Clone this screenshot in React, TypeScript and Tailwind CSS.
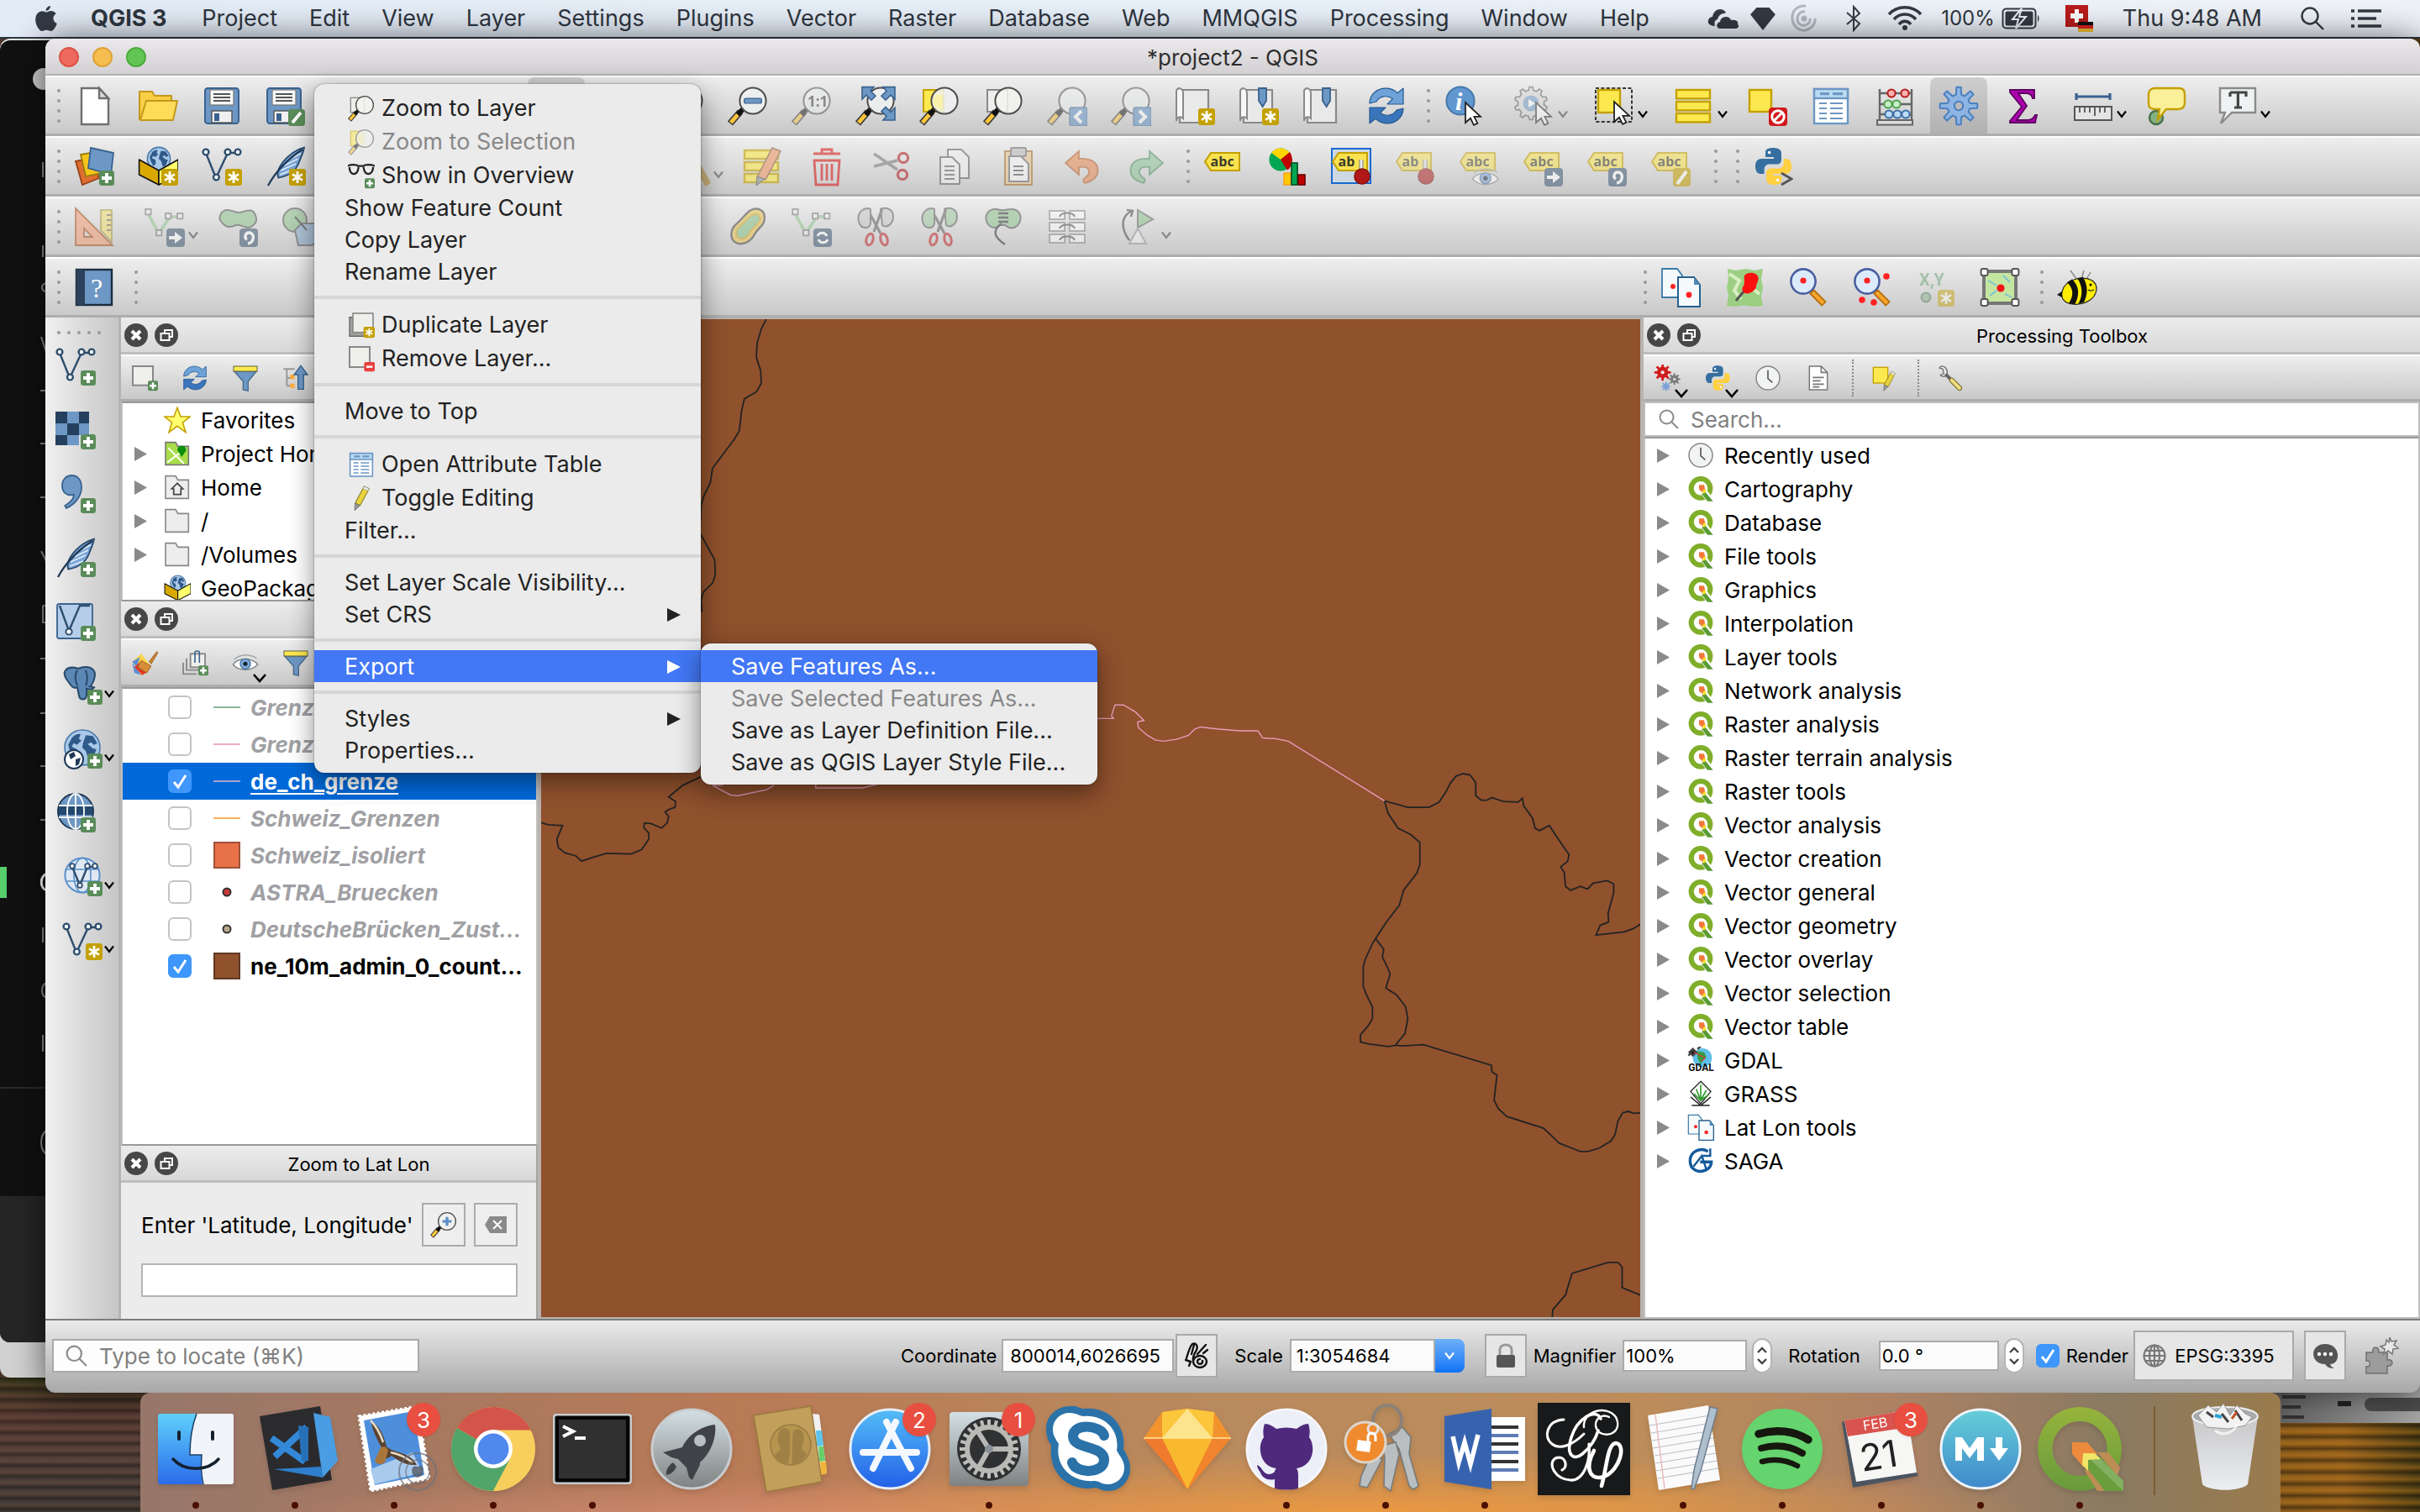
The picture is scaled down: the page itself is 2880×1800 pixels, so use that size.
import React from "react";

type Kids = { children?: React.ReactNode };
type IconProps = { className?: string };

/* ---------- drawing helpers ---------- */

function gearPath(cx: number, cy: number, teeth: number, outer: number, inner: number) {
  const pts: string[] = [];
  const step = (Math.PI * 2) / teeth;
  for (let i = 0; i < teeth; i++) {
    const a = i * step - Math.PI / 2;
    const at = (r: number, o: number) =>
      `${(cx + r * Math.cos(a + o * step)).toFixed(2)} ${(cy + r * Math.sin(a + o * step)).toFixed(2)}`;
    pts.push(at(inner, -0.3), at(outer, -0.15), at(outer, 0.15), at(inner, 0.3));
  }
  return `M${pts.join("L")}Z`;
}

function Svg({ children, className = "size-12" }: Kids & IconProps) {
  return (
    <svg viewBox="0 0 24 24" fill="none" aria-hidden="true" className={`${className} shrink-0`}>
      {children}
    </svg>
  );
}

const PlusBadge = () => (
  <g>
    <rect x="15" y="14.5" width="9" height="9" rx="1.6" fill="#5a8c5a" />
    <path d="M19.5 16v6M16.5 19h6" stroke="#fff" strokeWidth="1.9" />
  </g>
);
const StarBadge = () => (
  <g>
    <rect x="14" y="13.500" width="10" height="10" rx="1.6" fill="#c4a000" />
    <path d="M19 15v7M16 16.700l6 3.600M16 20.300l6-3.600" stroke="#fff" strokeWidth="1.4" />
  </g>
);
const ArrowBadge = () => (
  <g>
    <rect x="13" y="13" width="11" height="11" rx="2" fill="#415a75" />
    <path d="M14.500 17.500h3.500v-2.500l4.500 3.500-4.500 3.500v-2.500h-3.500z" fill="#fff" />
  </g>
);
const RotateBadge = () => (
  <g>
    <rect x="13" y="13" width="11" height="11" rx="2" fill="#415a75" />
    <path d="M18 22c3.600-.5 4.500-6 1-6.500-2.500-.2-3.500 3-1.500 4" stroke="#fff" strokeWidth="1.700" />
  </g>
);

function Lens({ children, blank }: Kids & { blank?: boolean }) {
  return (
    <g>
      <path d="M1.500 22.500L7.500 15.500" stroke="#3a3a3a" strokeWidth="4" />
      <path d="M1.900 22L6.200 17" stroke="#fcc63c" strokeWidth="2.400" />
      <path d="M6 17.300L9.500 13.500" stroke="#111" strokeWidth="3" />
      <circle cx="15" cy="9" r="7.800" fill={blank ? "#f3f3f0" : "#eef1f1"} fillOpacity="0.85" stroke="#4d4d4d" strokeWidth="1" />
      {children}
    </g>
  );
}

const VectorV = ({ c = "#2e4e6e", f = "#fff" }: { c?: string; f?: string }) => (
  <g stroke={c} strokeWidth="1.200">
    <path d="M2.500 4L8.500 19 15.500 4h6" fill="none" />
    <circle cx="2.500" cy="3.500" r="1.700" fill={f} />
    <circle cx="15.500" cy="3.500" r="1.700" fill={f} />
    <circle cx="21.500" cy="3.500" r="1.700" fill={f} />
    <circle cx="8.700" cy="18.500" r="1.700" fill={f} />
  </g>
);
const EditV = () => (
  <g>
    <path d="M2 4L8.500 16 15 6h7" stroke="#8fc48f" strokeWidth="1.800" />
    <g fill="#eee" stroke="#777" strokeWidth="0.900">
      <rect x="0.600" y="1.500" width="3.200" height="3.200" />
      <rect x="12.500" y="4" width="3.200" height="3.200" />
      <rect x="19.500" y="4" width="3.200" height="3.200" />
      <rect x="7" y="14" width="3.200" height="3.200" />
    </g>
  </g>
);
const Feather = () => (
  <g>
    <path d="M23 .8c-6 1.500-12.500 7-15 12.500-.8 1.800-1 3.700-.4 5.500C13 18 18 15 20 9.500 21 6.500 22.500 4 23 .8z" fill="#7ba6d6" stroke="#27496b" strokeWidth="0.900" />
    <path d="M8.500 17l8-3M9 14.500l9-4M11 11.500l8.500-4M13 8.500l8-4.200" stroke="#dcebf8" strokeWidth="0.900" />
    <path d="M22 2C14 7 6 15 1.500 23.500" stroke="#1f3a57" strokeWidth="1.100" />
  </g>
);
const Globe = ({ x = 12, y = 12, r = 10 }: { x?: number; y?: number; r?: number }) => (
  <g>
    <circle cx={x} cy={y} r={r} fill="#a9c8e8" stroke="#4a78ab" strokeWidth="0.800" />
    <path
      transform={`translate(${x - r} ${y - r}) scale(${r / 10})`}
      d="M4 4.500c2-2 4-2.500 5-2l-1 2.500 1.500 1-2.500 2.500-2-1L4 9.500l3 1.500.5 3-2 2.500C4 15 2.500 11 2 8.500zM12 3l4 .5 2.500 4-2 1-1.500-1.500-2 1 3 2.500 2 .5-2 5-2.500 1-1.500-5-2-2 .5-3z"
      fill="#2f5a8a"
      stroke="none"
    />
  </g>
);
const GeoBox = () => (
  <g stroke="#111" strokeWidth="0.800" strokeLinejoin="round">
    <Globe x={12.5} y={7.5} r={6.8} />
    <path d="M.8 8L12.500 14.500V23L.8 17z" fill="#d9a800" />
    <path d="M24 8L12.500 14.500V23L24 17z" fill="#ffff6e" />
  </g>
);
const Arrows = () => (
  <g stroke="#24588f" strokeWidth="0.600" strokeLinejoin="round">
    <path d="M2 10.500C2 5 7 1 12.500 1.600c2.300.2 4.500 1.200 6 2.800L22 1.600v9.400h-9.500l3.200-3.200C12.500 5.500 8 6 6 9.500z" fill="#6fa3d8" />
    <path d="M22 13.500c0 5.500-5 9.500-10.500 8.900-2.300-.2-4.500-1.200-6-2.800L2 22.400V13h9.500l-3.200 3.200c3.200 2.300 7.700 1.800 9.700-1.700z" fill="#3a74ba" />
  </g>
);
const Tag = ({ t = "abc" }: { t?: string }) => (
  <g>
    <path d="M4.500 4h17v10.500h-17L1 9.200z" fill="#f9e24f" stroke="#c4a000" strokeWidth="1" />
    <text x="4.300" y="12" fontSize="8" fontWeight="700" fontFamily="Open Sans, sans-serif" fill="#3b3b2a">{t}</text>
  </g>
);
const Pin = () => (
  <g>
    <path d="M18 8v7" stroke="#8a8a8a" strokeWidth="2.600" />
    <path d="M18 8v7" stroke="#eee" strokeWidth="1.400" />
    <circle cx="18.500" cy="18" r="4.600" fill="#b01717" stroke="#7c1010" strokeWidth="0.600" />
  </g>
);
const Cursor = ({ x = 0, y = 0 }: { x?: number; y?: number }) => (
  <path transform={`translate(${x} ${y})`} d="M12 10v12l3-2.600 2 4 2.200-1-2-4h3.800z" fill="#fff" stroke="#222" strokeWidth="0.900" />
);
const Snake = () => (
  <g>
    <path d="M11.800 1C7.500 1 7.500 3 7.500 4.200V6.500h5v1H5.200C2.500 7.500 1.500 9.500 1.500 12s1 4.500 3.300 4.500h2v-2.800c0-1.700 1.300-3 3-3h4.700c1.500 0 2.500-1.100 2.500-2.500v-4C17 2 15 1 11.800 1z" fill="#366f9f" />
    <circle cx="9.800" cy="3.800" r="0.900" fill="#fff" />
    <path d="M12.800 23c4.300 0 4.300-2 4.300-3.200v-2.300h-5v-1h7.300c2.700 0 3.700-2 3.700-4.500s-1-4.500-3.300-4.500h-1.500v2.800c0 1.700-1.300 3-3 3h-4.700c-1.500 0-2.500 1.100-2.500 2.500v4c0 2.200 1.500 3.200 4.700 3.200z" fill="#ffd041" />
    <circle cx="14.800" cy="20.200" r="0.900" fill="#fff" />
  </g>
);
const GridTable = () => (
  <g stroke="#6d97c4">
    <rect x="2" y="2" width="20" height="20.500" fill="#fff" strokeWidth="1.200" />
    <rect x="2" y="2" width="20" height="5.500" fill="#b8daf3" strokeWidth="1.200" />
    <path d="M5.500 4.800H11M13 4.800h6" strokeWidth="1.700" />
    <path d="M5 10.500h4.500M11.500 10.500H19M5 13.500h4.500M11.500 13.500H19M5 16.500h4.500M11.500 16.500H19M5 19.500h4.500M11.500 19.500H19" strokeWidth="1.100" />
  </g>
);
const CopyDots = () => (
  <g>
    <path d="M1 1h9l3 4v13H1z" fill="#f5fafd" stroke="#3a7aa8" strokeWidth="0.900" />
    <circle cx="7.500" cy="11.500" r="1.500" fill="#f22" />
    <path d="M10.500 6H20l3.500 4.500v13h-13z" fill="#f5fafd" stroke="#25608f" strokeWidth="1" />
    <path d="M20 6v4.500h3.500z" fill="#4d8cbb" />
    <circle cx="17" cy="16.500" r="1.700" fill="#f22" />
  </g>
);
const Funnel = () => (
  <g>
    <path d="M2 6l8 9v7.500l4.500 1V15L22 6z" fill="#6d97c4" stroke="#49698c" />
    <rect x="1.500" y="1.500" width="21" height="4.500" fill="#fce94f" stroke="#6b6b40" strokeWidth="0.800" />
  </g>
);
const Eye = () => (
  <g>
    <path d="M1 13.500C5 7.500 18 7 23 13.500 18 19.500 6 20 1 13.500z" fill="#fff" stroke="#7b8288" />
    <circle cx="12" cy="13" r="4.600" fill="#7ba8da" stroke="#3d6592" strokeWidth="0.800" />
    <circle cx="12" cy="13" r="1.900" fill="#17202b" />
    <path d="M2 9C7 4 17 4 22 8" stroke="#9aa0a5" strokeWidth="1" />
  </g>
);
const Clock = () => (
  <g stroke="#858585">
    <circle cx="12" cy="12" r="10.500" fill="#f2f4f3" strokeWidth="1.100" />
    <path d="M12 5v7.500l4 3.500" stroke="#555" strokeWidth="1.200" />
  </g>
);
const Pencil = ({ c = "#e8d33f" }: { c?: string }) => (
  <g>
    <path d="M14.500 1.500l4.500 2-8 15-4.500-2z" fill={c} stroke="#8a7a20" strokeWidth="0.800" />
    <path d="M6.500 16.500l4.500 2-5 4.500z" fill="#999" stroke="#666" strokeWidth="0.600" />
    <path d="M14.500 1.500l4.500 2-1 2-4.500-2z" fill="#eee" stroke="#999" strokeWidth="0.500" />
  </g>
);
const QMark = () => (
  <g>
    <circle cx="12" cy="11.500" r="8.500" stroke="#7fae2a" strokeWidth="4.600" />
    <path d="M12.500 11.500l8 11" stroke="#fff" strokeWidth="6" />
    <path d="M15.500 14l7.500 9h-5l-5-6.500z" fill="#5a9a33" />
    <path d="M10.500 8.500h4.500l1 4.500-2.500 2-3-2.500z" fill="#f1783c" />
    <path d="M13.500 13.500l2.500-1.500 1 2.500-2.500 2z" fill="#f8e02f" />
  </g>
);
const Scissors = ({ blob = "#9cc79c" }: { blob?: string }) => (
  <g>
    <path d="M8 1C3 1 1 5 2 9s6 5 7 1V1.500zM15 1.500c3.500-1.500 7.500 0 7.500 4.500s-4 7-6.500 5z" fill={blob} stroke="#555" />
    <path d="M16 1l-5 14M9 5l6 11" stroke="#555" strokeWidth="1.600" />
    <ellipse cx="8.500" cy="19.500" rx="2" ry="3.500" stroke="#c01818" strokeWidth="1.500" transform="rotate(15 8.500 19.500)" />
    <ellipse cx="17" cy="19.500" rx="2" ry="3.500" stroke="#c01818" strokeWidth="1.500" transform="rotate(-15 17 19.500)" />
  </g>
);
const Sheet = () => (
  <g>
    <path d="M3 4.500V22h17V2.500H4.500" fill="#e9e9e9" stroke="#8a8a8a" strokeWidth="1.100" />
    <path d="M1 3c1-2.500 4-1.500 4 1.500v15c-1.500-1.500-4-1-4 1.500z" fill="#f7f7f7" stroke="#8a8a8a" strokeWidth="1" />
  </g>
);
const Bookmark = () => <path d="M12 1.500h4.500V9l-2.200 3.500L12 9z" fill="#6d97c4" stroke="#39628f" strokeWidth="0.900" />;

/* ---------- icons by name ---------- */

const ICONS: Record<string, React.ReactNode> = {
  newDoc: (
    <g stroke="#6f6f6f" strokeWidth="1.200">
      <path d="M4.500 1.500h10.500l5.500 6v15.500h-16z" fill="#fff" />
      <path d="M15 1.500v6h5.500z" fill="#d8d8d8" />
    </g>
  ),
  open: (
    <g stroke="#c4981c" strokeWidth="1" strokeLinejoin="round">
      <path d="M1 3.500h7.500l1.500 2.500H20v14H1z" fill="#f8cf45" />
      <path d="M5 9h18.500l-2.500 11.500H1.500z" fill="#fedb58" />
    </g>
  ),
  save: (
    <g>
      <rect x="2" y="1.500" width="20" height="21" rx="1.600" fill="#6d97c4" stroke="#39628f" strokeWidth="1" />
      <rect x="5" y="2.500" width="14" height="9" fill="#f7f7f7" stroke="#777" strokeWidth="0.600" />
      <path d="M7 5h10M7 7h10M7 9h10" stroke="#555" strokeWidth="1" />
      <rect x="6" y="15" width="12" height="7" fill="#f0f0f0" stroke="#555" strokeWidth="0.700" />
      <rect x="7.500" y="16.500" width="3" height="4.500" fill="#39628f" />
    </g>
  ),
  saveAs: (
    <g>
      <rect x="1" y="1.500" width="20" height="21" rx="1.600" fill="#6d97c4" stroke="#39628f" strokeWidth="1" />
      <rect x="4" y="2.500" width="14" height="9" fill="#f7f7f7" stroke="#777" strokeWidth="0.600" />
      <path d="M6 5h10M6 7h10M6 9h10" stroke="#555" strokeWidth="1" />
      <rect x="5" y="15" width="12" height="7" fill="#f0f0f0" stroke="#555" strokeWidth="0.700" />
      <rect x="6.500" y="16.500" width="3" height="4.500" fill="#39628f" />
      <rect x="13.500" y="14" width="10" height="10" rx="1.800" fill="#5a8c5a" />
      <path d="M16 22l5-6" stroke="#fff" strokeWidth="1.900" />
    </g>
  ),
  hand: <path d="M6 12V6m4 5V3m4 8V4m4 8V7v8c0 5-3 7-6 7s-6-3-9-9" stroke="#555" strokeWidth="2" />,
  zoomIn: <Lens><path d="M15 5.500v7M11.500 9h7" stroke="#5b8dc4" strokeWidth="2.400" /></Lens>,
  zoomOut: <Lens><rect x="9.800" y="7.600" width="10.400" height="2.900" rx="1" fill="#6d97c4" stroke="#39628f" strokeWidth="0.600" /></Lens>,
  zoom11: (
    <g opacity="0.5"><Lens><text x="9.500" y="12.500" fontSize="8.500" fontWeight="700" fontFamily="Open Sans, sans-serif" fill="#333">1:1</text></Lens></g>
  ),
  zoomFull: (
    <g>
      <Lens />
      <g fill="#6d97c4" stroke="#39628f" strokeWidth="0.800">
        <path d="M4 .8h7l-2 2.300 3 3-2.500 2.500-3-3L4 8z" />
        <path d="M23.500.8h-7l2 2.300-3 3 2.500 2.500 3-3 2.500 2.400z" />
        <path d="M23.500 20.500h-7l2-2.300-3-3 2.500-2.500 3 3 2.500-2.500z" />
      </g>
    </g>
  ),
  zoomSel: <g><rect x="2.500" y="2.500" width="12" height="13" fill="#fce94f" stroke="#c4a000" /><Lens><path d="M10 5.500h4v8.500c-3 0-6-2-6-5z" fill="#fbf0a0" opacity="0.800" /></Lens></g>,
  zoomLayer: <g><rect x="2.500" y="2.500" width="12" height="13" fill="#eeeeec" stroke="#888" /><Lens blank /></g>,
  zoomPrev: <g opacity="0.5"><Lens /><rect x="13.500" y="13" width="10.500" height="11" rx="1" fill="#5b8dc4" stroke="#39628f" strokeWidth="0.700" /><path d="M20.500 15l-3.500 3.500 3.500 3.500" stroke="#fff" strokeWidth="2" /></g>,
  zoomNext: <g opacity="0.5"><Lens /><rect x="13.500" y="13" width="10.500" height="11" rx="1" fill="#5b8dc4" stroke="#39628f" strokeWidth="0.700" /><path d="M17 15l3.500 3.500L17 22" stroke="#fff" strokeWidth="2" /></g>,
  newMap: <g><Sheet /><StarBadge /></g>,
  newBookmark: <g><Sheet /><Bookmark /><StarBadge /></g>,
  bookmark: <g><Sheet /><Bookmark /></g>,
  refresh: <Arrows />,
  identify: <g><circle cx="10" cy="9" r="8.300" fill="#6197cf" stroke="#4677ab" /><text x="7" y="14.500" fontSize="15" fontWeight="700" fontStyle="italic" fontFamily="Liberation Serif, serif" fill="#fff">i</text><Cursor x={1} /></g>,
  action: <g opacity="0.5"><path d={gearPath(10, 10.5, 10, 9.8, 7.8)} fill="#d8d8d8" stroke="#555" strokeWidth="0.800" /><circle cx="10" cy="10.500" r="4.800" fill="#6d97c4" /><path d="M8.500 8l4 2.500-4 2.500z" fill="#fff" /><Cursor x={1} /></g>,
  select: <g><rect x="1" y="1.500" width="21.500" height="20" stroke="#333" strokeWidth="1" strokeDasharray="2 1.200" /><rect x="2.500" y="2.500" width="13" height="13.500" fill="#fce94f" stroke="#c4a000" strokeWidth="1.200" /><Cursor y={-0.500} /></g>,
  bars: <g fill="#fce94f" stroke="#c4a000" strokeWidth="1.200"><rect x="1.500" y="2.500" width="20" height="5.200" /><rect x="1.500" y="9.500" width="20" height="5.200" /><rect x="1.500" y="16.500" width="20" height="5.200" /></g>,
  deselect: <g><rect x="1.500" y="2.500" width="13" height="13" fill="#fce94f" stroke="#c4a000" strokeWidth="1.200" /><rect x="13" y="13" width="11" height="11" rx="2" fill="#d0191c" /><circle cx="18.500" cy="18.500" r="3.600" stroke="#fff" strokeWidth="1.500" /><path d="M16 21l5-5" stroke="#fff" strokeWidth="1.500" /></g>,
  table: <GridTable />,
  abacus: (
    <g>
      <path d="M3 2v18M22 2v18M3 4.500h19M3 11h19M3 17h19" stroke="#666" strokeWidth="1.200" />
      <g fill="#ffb0b0" stroke="#b81c1c"><circle cx="10" cy="4.500" r="2.300" /><circle cx="18" cy="4.500" r="2.300" /></g>
      <g fill="#c8f0c8" stroke="#4f9f4f"><circle cx="8" cy="11" r="2.300" /><circle cx="13" cy="11" r="2.300" /></g>
      <g fill="#bcdcf6" stroke="#3d6fa5"><circle cx="8.500" cy="17" r="2.300" /><circle cx="13.500" cy="17" r="2.300" /><circle cx="18.500" cy="17" r="2.300" /></g>
      <rect x="1.500" y="20.500" width="21" height="2.800" fill="#ddd" stroke="#666" />
    </g>
  ),
  gear: <g><path d={gearPath(12, 12, 8, 11.2, 6.8)} fill="#8db4e2" stroke="#4a7fc1" strokeWidth="1" strokeLinejoin="round" /><circle cx="12" cy="12" r="2.600" fill="#b9b9b9" stroke="#4a7fc1" /></g>,
  sigma: <path d="M4.500 2.500h14.500v5h-1c-.5-2-1.500-3-4-3H9.500l5 7.500-6 8.500h6.500c2.500 0 3.500-1 4.500-3h1l-1 4.500H4.500V21l7-8.500L4.500 4z" fill="#ad00ad" stroke="#5c0060" strokeWidth="0.900" />,
  ruler: <g><path d="M2 6.500h20M2 4.500v4M22 4.500v4" stroke="#39628f" strokeWidth="1.600" /><rect x="1" y="12.500" width="22" height="8" fill="#e4e4e4" stroke="#555" /><path d="M4 13v3M7 13v3M10 13v3M13 13v5M16 13v3M19 13v3" stroke="#555" strokeWidth="0.900" /></g>,
  mapTip: <g><circle cx="6" cy="19" r="4" fill="#84b184" stroke="#48704b" strokeWidth="1.200" /><path d="M5 1.500h14.500c2.500 0 3.500 1.500 3.500 3.500v5c0 2.500-1.500 4-4 4h-7L7 20l1-6H5.500c-2.500 0-4-1-4-3.500V5c0-2 1.500-3.500 3.500-3.500z" fill="#fbf09a" stroke="#c4a000" strokeWidth="1.200" /></g>,
  annot: <g><path d="M2 1.500h21V16H9l-6.500 6.500L5 16H2z" fill="#eef2f3" stroke="#8a8a8a" strokeWidth="1.200" /><path d="M8 4h9.500v2.500M8 4v2.500M12.700 4v9M10.500 13h4.500" stroke="#444" strokeWidth="1.600" /></g>,
  layers: <g strokeWidth="0.900"><path d="M1 9l10-2 4 12-10 4z" fill="#e06e30" stroke="#95431a" /><path d="M4 5l12-2 1 13-10 2z" fill="#f5c518" stroke="#9a7c0c" /><path d="M10 1l13.500 3L22 17 8.500 13z" fill="#6d97c4" stroke="#39628f" /><PlusBadge /></g>,
  geopkg: <g><GeoBox /><StarBadge /></g>,
  geopkgPlain: <GeoBox />,
  vStar: <g><VectorV /><StarBadge /></g>,
  vPlus: <g><VectorV /><PlusBadge /></g>,
  featherStar: <g><Feather /><StarBadge /></g>,
  featherPlus: <g><Feather /><PlusBadge /></g>,
  tools: <g opacity="0.5"><path d="M4 2l14 18" stroke="#888" strokeWidth="3" /><path d="M15 9l8 14" stroke="#b58a20" strokeWidth="4" /></g>,
  editMulti: <g opacity="0.6"><g fill="#fce94f" stroke="#c4a000" strokeWidth="1.200"><rect x="1" y="2.500" width="20" height="5" /><rect x="1" y="9.500" width="20" height="5" /><rect x="1" y="16.500" width="20" height="5" /></g><path d="M17.500 1l5 2-9 17-5-1.500z" fill="#ef9b6d" stroke="#8a5a40" strokeWidth="0.700" /><path d="M8.500 18l4.500 1.500L8 23.500z" fill="#999" stroke="#555" strokeWidth="0.500" /></g>,
  trash: <g opacity="0.6" stroke="#d81e1e" strokeWidth="1.400"><path d="M4.500 8.500h15l-1 14.500h-13z" /><path d="M4 4.500h16M9 4V2h6v2M9 10.500v10M12 10.500v10M15 10.500v10" /></g>,
  cut: <g opacity="0.55"><path d="M2 4.500L16 14M2 12l14-3.500" stroke="#777" strokeWidth="1.700" /><circle cx="19.500" cy="7" r="2.800" stroke="#b01818" strokeWidth="1.600" /><circle cx="19" cy="17" r="2.800" stroke="#b01818" strokeWidth="1.600" /></g>,
  copy: <g opacity="0.5" fill="#f4f4f4" stroke="#555"><path d="M8 2h8l4.500 4.500V19H8z" /><path d="M3.500 6.500h7L15 11v11.500H3.500z" /><path d="M6 12h6M6 14.500h6M6 17h6M6 19.500h6" /></g>,
  paste: <g opacity="0.55"><rect x="4" y="3" width="16" height="20" fill="#e9c790" stroke="#a5702a" /><path d="M6.500 6h7l4.500 4.500v10.500H6.500z" fill="#f7f7f7" stroke="#666" /><path d="M9 12h6M9 14.500h6M9 17h6" stroke="#555" /><rect x="7.500" y="1" width="9" height="5" rx="1" fill="#bbb" stroke="#666" /></g>,
  undo: <path opacity="0.55" d="M10 3L2 10l8 7v-4.500c6-1 8.500 3 3 7 0 0-1 1 .5 2.500 7-2 8.500-5.500 7.500-9.500C20 8.500 15 7 10 7.500z" fill="#e98a55" stroke="#b5602e" strokeWidth="0.900" />,
  redo: <path opacity="0.55" d="M14 3l8 7-8 7v-4.500c-6-1-8.500 3-3 7 0 0 1 1-.5 2.500-7-2-8.500-5.500-7.500-9.500C4 8.500 9 7 14 7.500z" fill="#8fc49a" stroke="#4e9160" strokeWidth="0.900" />,
  label: <Tag />,
  diagram: <g><circle cx="8" cy="8" r="6.800" fill="#00a651" /><path d="M8 8V1.200A6.800 6.800 0 0 0 2.500 4zM8 8l5.500-4A6.800 6.800 0 0 0 8 1.200z" fill="#ffd500" /><path d="M8 8l5.500-4.500c2.500 4 1.500 9-1.500 10.800z" fill="#c00000" /><rect x="10" y="16" width="4" height="7" fill="#ffc800" stroke="#f90" strokeWidth="0.600" /><rect x="14.500" y="10" width="3.500" height="13" fill="#00a651" stroke="#004d20" strokeWidth="0.800" /><rect x="18.500" y="17" width="4" height="6" fill="#c00000" stroke="#600" strokeWidth="0.800" /></g>,
  pinBox: <g><rect x="0.500" y="1.500" width="23" height="20.500" fill="#cdd8e4" stroke="#1a6ad0" strokeWidth="1" /><Tag t="ab" /><Pin /></g>,
  pinTag: <g opacity="0.5"><Tag t="ab" /><Pin /></g>,
  eyeTag: <g opacity="0.5"><Tag /><g transform="translate(7.500 10) scale(.7)"><Eye /></g></g>,
  moveTag: <g opacity="0.55"><Tag /><ArrowBadge /></g>,
  rotTag: <g opacity="0.55"><Tag /><RotateBadge /></g>,
  editTag: <g opacity="0.55"><Tag /><rect x="13.500" y="13" width="10.500" height="11" rx="2" fill="#c4a000" /><path d="M16 22.500l5.500-7.500" stroke="#fff" strokeWidth="2" /></g>,
  python: <g><Snake /><path d="M17 16l6 3.500-6 3.500" fill="none" stroke="#555" strokeWidth="1.500" /></g>,
  setsquare: <g opacity="0.6"><path d="M1 1v22h22zM6 13v5h5z" fill="#f1a37e" stroke="#a7592f" strokeWidth="0.900" fillRule="evenodd" /><path d="M16 2h6.500v19L16 14z" fill="#f0df7c" stroke="#a0923e" strokeWidth="0.800" /><path d="M19.500 5H22M19.500 8H22M19.500 11H22M19.500 14H22" stroke="#555" strokeWidth="0.700" /></g>,
  moveFeat: <g opacity="0.55"><EditV /><ArrowBadge /></g>,
  rotFeat: <g opacity="0.55"><path d="M2 4c3-4 7-1 10-.5S20 0 22 4s1 6-2 8-6-2-9-1-5 2-8-1-1.500-4-1-6z" fill="#8fc48f" stroke="#555" /><RotateBadge /></g>,
  simplify: <g opacity="0.55"><circle cx="8" cy="8" r="7" fill="#8fc48f" stroke="#555" /><path d="M8 14l4-4h12v10l-6 3h-8z" fill="#8fb4d8" stroke="#555" /><path d="M8 6l7 8" stroke="#333" /></g>,
  offset: <g opacity="0.6"><path d="M13 2.500c4-2.500 9-1 9 4s-4 6-6 10-7 7-11 5-3.500-8 0-11 5-5.500 8-8z" fill="#e8c65a" stroke="#555" strokeWidth="1.200" /><path d="M14.500 5c3-1.500 5 0 4.800 2.500S15 12 13.500 15s-4.500 5-7 3.500-1.500-5 1-7 4.500-5 7-6.500z" fill="#8fc48f" stroke="#d0a92c" strokeWidth="0.900" /></g>,
  reshape: <g opacity="0.55"><EditV /><rect x="13" y="13" width="11" height="11" rx="2" fill="#415a75" /><path d="M15.500 17.500c1-2.500 4.500-2.500 5.500 0M21.500 19.500c-1 2.500-4.500 2.500-5.500 0" stroke="#fff" strokeWidth="1.500" /></g>,
  splitA: <g opacity="0.5"><Scissors blob="#c8c8c8" /></g>,
  splitB: <g opacity="0.5"><Scissors /></g>,
  merge: <g opacity="0.55"><path d="M8 1.500C3 1 1 5 2 8.500S7 14 10 11h3c4 3.500 8 1 9-2.500s-1-7-5-7-5 1.500-9 0z" fill="#8fc48f" stroke="#555" /><path d="M9 4h6M9 6.500h6M9 9h6" stroke="#333" strokeWidth="1.200" /><path d="M11 10c-7 5-3 9 2 12.500" stroke="#333" strokeWidth="1.200" /></g>,
  mergeAttr: <g opacity="0.5" stroke="#888" fill="#fff"><rect x="1.500" y="2.500" width="9" height="5" /><rect x="13.500" y="2.500" width="9" height="5" /><rect x="1.500" y="9.500" width="9" height="5" /><rect x="13.500" y="9.500" width="9" height="5" /><rect x="1.500" y="16.500" width="9" height="5" /><rect x="13.500" y="16.500" width="9" height="5" /><path d="M7.500 6c1-3 8-3 9 0M7.500 13c1-3 8-3 9 0M7.500 20c1-3 8-3 9 0" fill="none" stroke="#444" /></g>,
  rotSym: <g opacity="0.55"><path d="M7 20C1 12 3 5 8 3M5.500 2l3.500.5-1 3.500" stroke="#444" strokeWidth="1.200" /><path d="M12 2l9 5.500-9 5z" fill="#8fc48f" stroke="#666" /><path d="M12 13l5 9H7z" fill="#eee" stroke="#999" /></g>,
  help: <g><rect x="1.500" y="1.500" width="21" height="21" fill="#6d97c4" stroke="#1c2c40" strokeWidth="1.200" /><rect x="1.500" y="1.500" width="5" height="21" fill="#2c425c" /><text x="10" y="18" fontSize="16" fontFamily="Liberation Serif, serif" fill="#fff">?</text></g>,
  copyDots: <CopyDots />,
  mapPin: <g><path d="M2 1l5 1 6-1 5 1 5-1-1 6 1 5-1 6 1 5-6 .5-5-.8-5 .8-5.500-.5 1-6-1-5 1-5z" fill="#9ccf83" /><path d="M3 4l6 4-3 6 4 5M17 13l4 3" stroke="#d8efc2" strokeWidth="2" /><path d="M12 14l-5 6" stroke="#555" strokeWidth="1.600" /><path d="M12 5c2-2.500 7-2 8 .5s-1 4-1 6-4 5-6.500 4-2-3-1-4.500 0-4 .5-6z" fill="#fb1010" /></g>,
  llZoom: <g><circle cx="9" cy="8.500" r="7.300" fill="#dcebfb" stroke="#4a5f9f" strokeWidth="1.300" /><circle cx="9" cy="8" r="1.800" fill="#f22" /><path d="M14 14.500l7.500 7.500" stroke="#b56a08" strokeWidth="4" /><path d="M14.500 15l6.500 6.500" stroke="#f6a52a" strokeWidth="2.200" /></g>,
  llMulti: <g><circle cx="9" cy="8.500" r="7.300" fill="#dcebfb" stroke="#4a5f9f" strokeWidth="1.300" /><circle cx="9" cy="8" r="1.800" fill="#f22" /><path d="M14 14.500l7.500 7.500" stroke="#b56a08" strokeWidth="4" /><path d="M14.500 15l6.500 6.500" stroke="#f6a52a" strokeWidth="2.200" /><g fill="#f22"><circle cx="20.500" cy="5.500" r="1.900" /><circle cx="6" cy="19.500" r="1.900" /><circle cx="13" cy="21" r="1.900" /></g></g>,
  xy: <g opacity="0.45"><text x="2" y="11" fontSize="10" fontWeight="700" fontFamily="Roboto, sans-serif" fill="#5f9a6a">X,Y</text><circle cx="6" cy="18" r="2.700" fill="#84b184" stroke="#48704b" /><rect x="13" y="13.500" width="10" height="10" rx="1.800" fill="#c4a000" /><path d="M18 15v7M15 16.500l6 4M15 20.500l6-4" stroke="#fff" strokeWidth="1.300" /></g>,
  extent: <g><rect x="2.500" y="2.500" width="19" height="19" fill="#c4e6a0" stroke="#777" strokeWidth="2" /><circle cx="12.500" cy="12.500" r="2.300" fill="#f21414" /><path d="M5 8l5 3M14 5l4 4M6 17l4-3M15 16l4 2" stroke="#7fc0d8" strokeWidth="0.900" /><g fill="#fff" stroke="#555"><rect x="0.800" y="1" width="4" height="4" rx="1" /><rect x="19.200" y="1" width="4" height="4" rx="1" /><rect x="0.800" y="19" width="4" height="4" rx="1" /><rect x="19.200" y="19" width="4" height="4" rx="1" /></g></g>,
  bee: <g><path d="M8 2l5 7M16 2l-2 7M20 3l-3 5" stroke="#888" strokeWidth="0.700" /><path d="M3 18L0 16.500 3.500 14" fill="#111" /><path d="M4 12c3-5 12-7 17-4 4 3 3 9-2 12s-13 3-15.500-1C2.500 17 3 14 4 12z" fill="#ffed00" stroke="#222" strokeWidth="0.600" /><path d="M6 9c4 4 4 8 1 12.500l3.500.8c3-5 3-11-1.500-15zM12 6.500c3.500 5 3.500 11 .5 15.500l3.500-1c2.500-5 2.500-10-.5-15z" fill="#111" /><circle cx="20" cy="10.500" r="0.800" fill="#111" /><path d="M18.500 13.500c1.500 1 2.500.8 3.500-.2" stroke="#222" strokeWidth="0.600" /></g>,
  raster: <g><path d="M0 1h20v20H0z" fill="#6d97c4" /><path d="M0 1h7v7H0zM14 1h6v7h-6zM7 8h7v7H7zM0 15h7v6H0z" fill="#25405e" /><path d="M14 15h6v6h-6z" fill="#e0e0e0" /><PlusBadge /></g>,
  comma: <g><path d="M9.500 1c4 0 6 3 6 7 0 5-3.500 10-9 12.500l-.8-1.500C9 17 11 14.500 11 12.500 6 13.500 4 10.500 4 7s2.500-6 5.500-6z" fill="#6d97c4" stroke="#39628f" strokeWidth="0.900" /><PlusBadge /></g>,
  mesh: <g><rect x="1" y="1.500" width="21" height="20.500" rx="1" fill="#b5cde8" stroke="#39628f" strokeWidth="0.900" /><path d="M2.500 2.500L8 17.500 14.500 2.500h6" stroke="#2e4e6e" strokeWidth="1.200" /><circle cx="8" cy="18" r="1.800" fill="#fff" stroke="#2e4e6e" /><PlusBadge /></g>,
  elephant: <g><path d="M2 3c2-2.500 6-1.500 7.500-1C12 .8 17 0 19 3.500c1.500 3-1 8-2.500 9l2.500.7c-1 1.500-3 1.300-4.500.8V18c-.5 3-4 3-4.500 0l-1-5c-1.500 1-3 0-4-1.500C3 9 0 5.500 2 3z" fill="#5b87b5" stroke="#27496b" /><path d="M9 3c-2 3-1 7 0 9M14 3c1 3 1.500 6 0 9" stroke="#27496b" /><PlusBadge /></g>,
  wms: <g><Globe x={12} y={11} r={10.5} /><circle cx="7" cy="18" r="5.500" fill="#fff" stroke="#1f3a57" /><path d="M4 15l3-1.500 1 2.500-3 2zM8 18l3-1-1 4-2 1z" fill="#1f3a57" /><PlusBadge /></g>,
  wcs: <g><circle cx="12" cy="11" r="10.500" fill="#6d97c4" stroke="#1f3a57" /><path d="M2 8h20v5H2z" fill="#25486e" /><path d="M12 .5v21M2 7.500h20M2 14.500h20" stroke="#fff" strokeWidth="0.900" /><ellipse cx="12" cy="11" rx="5" ry="10.500" stroke="#fff" strokeWidth="0.900" /><PlusBadge /></g>,
  wfs: <g><circle cx="12" cy="11" r="10.300" fill="#dfe8f2" stroke="#5a90cc" /><ellipse cx="12" cy="11" rx="5" ry="10.300" stroke="#5a90cc" strokeWidth="0.800" /><path d="M2 7.500h20M2 14.500h20" stroke="#5a90cc" strokeWidth="0.800" /><path d="M6 6l4.500 11L15 6h4.500" stroke="#2e4e6e" strokeWidth="1.200" /><g fill="#fff" stroke="#2e4e6e" strokeWidth="0.900"><circle cx="6" cy="5.500" r="1.400" /><circle cx="15" cy="5.500" r="1.400" /><circle cx="19.500" cy="5.500" r="1.400" /><circle cx="10.500" cy="17" r="1.400" /></g><PlusBadge /></g>,
  addLayer: <g><rect x="1.500" y="1.500" width="18" height="17" fill="#efefec" stroke="#888" strokeWidth="1.500" /><PlusBadge /></g>,
  filter: <Funnel />,
  collapse: <g><path d="M1 4h10M4 4v15M4 12h4M4 19h4" stroke="#999" strokeWidth="1.500" /><rect x="7" y="9" width="4" height="4" fill="#fcaf3e" /><rect x="7" y="17" width="4" height="4" fill="#fcaf3e" /><path d="M16.500 1l-6 8h3.500v13h5V9h3.500z" fill="#6d97c4" stroke="#39628f" /></g>,
  style: <g><path d="M1 11L9 4l8 10-8 9z" fill="#fcd34d" /><path d="M1 12l8 11-6-2zM1 11l4 5 3-9z" fill="#5b8dd8" /><path d="M3 16l7 7 5-3-8-8z" fill="#e23a2c" /><path d="M23 2l-7 9 2 2 6-10z" fill="#c9802f" stroke="#93581a" strokeWidth="0.600" /><path d="M9 10l9 5-4 6-8-5z" fill="#d98c3a" stroke="#93581a" strokeWidth="0.600" /></g>,
  addGroup: <g><path d="M1.500 12v10h12M4.500 8v10.500h12" stroke="#888" strokeWidth="1.400" /><rect x="8" y="4" width="13" height="12" fill="#efefec" stroke="#888" strokeWidth="1.400" /><path d="M12 12V3c0-2 4-2 4 0v9" stroke="#39628f" strokeWidth="1.200" /><PlusBadge /></g>,
  eye: <Eye />,
  star: <path d="M12 1l3 8h8.500l-6.700 5.200L19.500 23 12 17.500 4.500 23l2.700-8.800L.5 9H9z" fill="#ffff70" stroke="#c4a000" strokeWidth="1.200" />,
  projHome: <g><path d="M1.500 2h9l2 3.500H22V22H1.500z" fill="#a8dc4a" stroke="#777" strokeWidth="1.200" /><path d="M3 20L20 7M4 7l14 14" stroke="#fff" strokeWidth="1.500" /><path d="M16 15l-4-6c0-3 2-4 4-4s4 1 4 4z" fill="#0b8f0b" /></g>,
  home: <g><path d="M1.500 2h9l2 3.500H22V22H1.500z" fill="#ededed" stroke="#888" strokeWidth="1.200" /><path d="M12 8.500l-5 5h1.800V18.500h6.400V13.500H17z" stroke="#444" strokeWidth="1.300" /></g>,
  folder: <path d="M1.500 2h9l2 3.500H22V22H1.500z" fill="#ededed" stroke="#888" strokeWidth="1.200" />,
  gears: <g><path d={gearPath(8, 7, 8, 7.5, 5)} fill="#d11c1c" /><circle cx="8" cy="7" r="1.600" fill="#eee" /><path d={gearPath(18.5, 13, 8, 5.3, 3.5)} fill="#7b7b7b" /><circle cx="18.500" cy="13" r="1.200" fill="#ddd" /><path d={gearPath(11, 19.5, 8, 4.3, 2.8)} fill="#7fa3d8" /></g>,
  snake: <Snake />,
  clock: <Clock />,
  doc: <g stroke="#777"><path d="M4 1.500h10.500L20 7v15.500H4z" fill="#fff" strokeWidth="1.100" /><path d="M14.500 1.500V7H20M7 11.500h10M7 14.500h7M7 17.500h10M7 20h6" strokeWidth="1.200" /></g>,
  note: <g><rect x="2.500" y="2.500" width="13" height="14" fill="#fce94f" stroke="#c4a000" /><g transform="translate(7 5) scale(.8)"><Pencil /></g></g>,
  wrench: <g><path d="M3 3l3 1 1 4-3 1.500C7 12 10 10 10 7.500c.3-3-2-6.500-5.500-6z" fill="#e8e8e8" stroke="#666" strokeWidth="0.900" /><path d="M8.500 8.500l6 6" stroke="#666" strokeWidth="3" /><path d="M14 14l7 7" stroke="#766a22" strokeWidth="4.600" strokeLinecap="round" /><path d="M14 14l7 7" stroke="#f0dc82" strokeWidth="3" strokeLinecap="round" /></g>,
  q: <QMark />,
  gdal: <g><circle cx="13.500" cy="10" r="8.500" fill="#5fc0ea" /><path d="M9 4l6 1 2 4-3 3-2 4-3-6z" fill="#3a9a3e" /><path d="M2 5l3-3 3 3-3 3zM9 2l3-2M1 8l2-2" stroke="#444" strokeWidth="1.800" fill="#222" /><path d="M6 5l10 5-3 3" stroke="#d33" strokeWidth="0.900" /><text x="1" y="21.500" fontSize="9" fontWeight="700" fontFamily="Roboto, sans-serif" fill="#111">GDAL</text></g>,
  grass: <g><path d="M12 1l9 9-9 11-9-11z" fill="#fff" stroke="#222" /><path d="M3 15l9 7.500 9-7.500M4 22.500h16" stroke="#222" strokeWidth="1.200" /><path d="M12 19V4M12 18L8 8M12 18l5-9M12 18l-6-6M12 18l7-5" stroke="#2d9a2d" strokeWidth="1.200" /></g>,
  saga: <g><path d="M18.500 3.500C11-.5 2.500 4 2.500 12S10 23.500 17 20c3-1.600 4.500-4 4.500-7H11.500" stroke="#145a9c" strokeWidth="2.600" /><path d="M20.500 1v6.500H14M5.500 17L13 7.500l4 12" stroke="#145a9c" strokeWidth="1.800" /></g>,
  dup: <g><rect x="1.500" y="5" width="16" height="17" fill="#a0a09c" stroke="#666" /><rect x="4.500" y="1.500" width="18" height="17" fill="#efefec" stroke="#888" strokeWidth="1.200" /><StarBadge /></g>,
  remove: <g><rect x="1.500" y="1.500" width="18" height="18" fill="#efefec" stroke="#888" strokeWidth="1.500" /><rect x="14.500" y="15" width="9.500" height="8.500" rx="1.500" fill="#e8423f" /><path d="M16.500 19.200h5.500" stroke="#fff" strokeWidth="1.800" /></g>,
  overview: <g><path d="M0 3.500c2-1.500 8-1.500 9 0h5c1-1.500 7-1.500 10 0M1.500 4.500C1 12 9 13 9.500 4.500M14 4.500C14.500 13 22.500 12 22.500 4.500" stroke="#222" strokeWidth="1.700" /><PlusBadge /></g>,
  pencil: <Pencil />,
  target: <Lens><path d="M15 5v8M11 9h8" stroke="#5b8dc4" strokeWidth="2.400" /></Lens>,
};

function Icon({ n, className = "size-12" }: { n: string; className?: string }) {
  return <Svg className={className}>{ICONS[n]}</Svg>;
}

const Chevron = ({ className = "text-black" }: IconProps) => (
  <svg viewBox="0 0 12 10" className={`h-[10px] w-[12px] shrink-0 ${className}`} fill="none" aria-hidden="true">
    <path d="M1 1.500l5 6.500 5-6.500" stroke="currentColor" strokeWidth="2.200" />
  </svg>
);

/* ---------- toolbars ---------- */

function Tool({ n, active }: { n: string; active?: boolean }) {
  return (
    <button type="button" aria-label={n} className="flex h-[68px] w-19 shrink-0 justify-center">
      <span className={active ? "flex w-[68px] items-center justify-center rounded-t-lg bg-gradient-to-b from-[#cfcfcf] to-[#b0b0b0]" : "flex w-[68px] items-center justify-center"}>
        <Icon n={n} />
      </span>
    </button>
  );
}
function DropTool({ n, dim }: { n: string; dim?: boolean }) {
  return (
    <button type="button" aria-label={n} className="flex h-[68px] w-[95px] shrink-0 items-center pl-[22px]">
      <Icon n={n} />
      <span className="mt-5 ml-1"><Chevron className={dim ? "text-[#888]" : "text-black"} /></span>
    </button>
  );
}
const Grip = ({ className = "w-4" }: IconProps) => (
  <span className={`flex shrink-0 flex-col items-end gap-2 pr-0.5 ${className}`}>
    {[0, 1, 2, 3].map((i) => <i key={i} className="size-1 rounded-full bg-[#999]" />)}
  </span>
);
const ToolRow = ({ children }: Kids) => (
  <div role="toolbar" className="flex h-18 shrink-0 items-center overflow-hidden border-t-2 border-b-3 border-t-white border-b-[#adadad] bg-gradient-to-b from-[#eeeeee] to-[#c9c9c9] pl-1">
    {children}
  </div>
);
const tools = (names: string[]) => names.map((n) => <Tool key={n} n={n} />);

function Toolbars() {
  return (
    <div className="shrink-0">
      <ToolRow>
        <Grip />{tools(["newDoc", "open", "save", "saveAs"])}
        <span className="w-[246px] shrink-0" />
        <Tool n="hand" active />
        <span className="w-19 shrink-0" />
        {tools(["zoomIn", "zoomOut", "zoom11", "zoomFull", "zoomSel", "zoomLayer", "zoomPrev", "zoomNext", "newMap", "newBookmark", "bookmark", "refresh"])}
        <Grip /><Tool n="identify" />
        <DropTool n="action" dim /><DropTool n="select" /><DropTool n="bars" />
        {tools(["deselect", "table", "abacus"])}
        <Tool n="gear" active /><Tool n="sigma" />
        <DropTool n="ruler" /><Tool n="mapTip" /><DropTool n="annot" />
      </ToolRow>
      <ToolRow>
        <Grip />{tools(["layers", "geopkg", "vStar", "featherStar"])}
        <span className="w-[397px] shrink-0" />
        <DropTool n="tools" dim />
        {tools(["editMulti", "trash", "cut", "copy", "paste", "undo", "redo"])}
        <Grip />{tools(["label", "diagram", "pinBox", "pinTag", "eyeTag", "moveTag", "rotTag", "editTag"])}
        <Grip className="w-5" /><Grip className="w-[26px]" /><Tool n="python" />
      </ToolRow>
      <ToolRow>
        <Grip /><Tool n="setsquare" /><DropTool n="moveFeat" dim />{tools(["rotFeat", "simplify"])}
        <span className="w-[455px] shrink-0" />
        {tools(["offset", "reshape", "splitA", "splitB", "merge", "mergeAttr"])}
        <DropTool n="rotSym" dim />
      </ToolRow>
      <ToolRow>
        <Grip /><Tool n="help" /><Grip />
        <span className="flex-1" />
        <div className="flex w-[934px] shrink-0 items-center">
          <Grip />{tools(["copyDots", "mapPin", "llZoom", "llMulti", "xy", "extent"])}
          <Grip /><Tool n="bee" />
        </div>
      </ToolRow>
    </div>
  );
}

/* ---------- menu bar ---------- */

const MENUS = ["Project", "Edit", "View", "Layer", "Settings", "Plugins", "Vector", "Raster", "Database", "Web", "MMQGIS", "Processing", "Window", "Help"];

function MenuBar() {
  return (
    <header className="flex h-[46px] shrink-0 items-center border-b-2 border-[#2c3744] bg-gradient-to-r from-[#e3ebf6] via-[#e8f0f9] to-[#eff3f8] pr-[46px] pl-[42px] text-[27px] text-[#2f3640]">
      <svg viewBox="0 0 26 32" className="mr-10 h-8 w-[26px] shrink-0" fill="#333a45" aria-hidden="true">
        <path d="M18 1c.2 3-2.500 6-5.300 5.800C12.400 4 15 1.200 18 1zM13 8.500c1.500 0 3-1.500 5.800-1.500 2.500 0 4.700 1.300 6 3.200-5 3-4 9.800 1 11.800C24.500 26 21.500 31 18.500 31c-2 0-2.800-1.200-5.200-1.200S10 31 8 31C4.500 31 .2 23.500.2 17.500.2 11 4.300 7.300 8.200 7.300c2.200 0 3.800 1.200 4.800 1.200z" />
      </svg>
      <nav className="flex items-center gap-[38px]">
        <button type="button" className="mr-1 font-bold">QGIS 3</button>
        {MENUS.map((m) => <button type="button" key={m}>{m}</button>)}
      </nav>
      <div className="ml-auto flex items-center">
        <svg viewBox="0 0 38 26" className="mr-3 h-[26px] w-[38px]" fill="#333a42" aria-hidden="true">
          <path d="M9 22C2 22 0 18 1 15s3-4 5-4c1-6 5-9 9-9 3 0 5 1 7 4l-2 1c-4 0-7 3-8 7-4 1-4 5-3 8z" />
          <path d="M15 25c-5 0-5-7 0-8 1-7 11-8 13-2 8-1 9 3 8 5 2 1 1 5-2 5z" />
        </svg>
        <svg viewBox="0 0 32 30" className="mr-4 h-7 w-8" fill="#333a42" aria-hidden="true"><path d="M8 1h16l8 9-16 20L0 10z" /></svg>
        <svg viewBox="0 0 34 34" className="mr-8 size-[34px]" fill="none" stroke="#b4bac2" strokeWidth="3" aria-hidden="true">
          <path d="M19 2C8 1 2 9 3 18s9 14 15 13 13-6 12-14M18 9c-6-1-9 4-9 9s5 8 9 7 7-4 6-8" /><circle cx="17" cy="17" r="2" fill="#b4bac2" />
        </svg>
        <svg viewBox="0 0 20 32" className="mr-[30px] h-8 w-5" fill="none" stroke="#333a42" strokeWidth="2" aria-hidden="true"><path d="M2 9l15 13-7 8V2l7 8L2 23" /></svg>
        <svg viewBox="0 0 42 30" className="mr-[22px] h-[30px] w-[42px]" fill="none" stroke="#333a42" strokeWidth="3.500" aria-hidden="true">
          <path d="M2 10C12-1 30-1 40 10M8 16c7-8 19-8 26 0M14 22c4-5 10-5 14 0" /><circle cx="21" cy="26" r="3" fill="#333a42" stroke="none" />
        </svg>
        <span className="mr-2 text-[24px]">100%</span>
        <svg viewBox="0 0 46 26" className="mr-[30px] h-[26px] w-[46px]" fill="none" aria-hidden="true">
          <rect x="1.500" y="1.500" width="39" height="23" rx="4" stroke="#333a42" strokeWidth="2" />
          <rect x="4.500" y="4.500" width="33" height="17" rx="2" fill="#333a42" />
          <path d="M43 9c2 1 2 7 0 8z" fill="#333a42" />
          <path d="M24 1l-11 13h7l-3 11 12-14h-8z" fill="#333a42" stroke="#eaf0f8" strokeWidth="2" />
        </svg>
        <svg viewBox="0 0 34 32" className="mr-[34px] h-8 w-[34px]" aria-hidden="true">
          <rect width="27" height="26" fill="#b81c1c" /><path d="M11 5h5v5h5v6h-5v5h-5v-5H6v-6h5z" fill="#fff" />
          <path d="M15 20h18v4H15z" fill="#111" /><path d="M15 24h18v4H15z" fill="#d22" /><path d="M15 28h18v4H15z" fill="#f2c230" />
        </svg>
        <span className="mr-[46px]">Thu 9:48 AM</span>
        <svg viewBox="0 0 28 28" className="mr-8 size-7" fill="none" stroke="#333a42" strokeWidth="2.400" aria-hidden="true"><circle cx="11" cy="11" r="9.500" /><path d="M18 18l9 9" /></svg>
        <svg viewBox="0 0 36 22" className="h-[22px] w-9" stroke="#333a42" strokeWidth="3.600" aria-hidden="true"><path d="M0 2h4M8 2h28M0 11h4M8 11h22M0 20h4M8 20h28" /></svg>
      </div>
    </header>
  );
}

/* ---------- dock panels ---------- */

const CloseIcon = () => (
  <svg viewBox="0 0 28 28" className="size-7" aria-hidden="true"><circle cx="14" cy="14" r="14" fill="#474747" /><path d="M9 9l10 10M19 9L9 19" stroke="#fff" strokeWidth="4" /></svg>
);
const FloatIcon = () => (
  <svg viewBox="0 0 28 28" className="size-7" fill="none" stroke="#fff" strokeWidth="2" aria-hidden="true"><circle cx="14" cy="14" r="14" fill="#474747" stroke="none" /><path d="M12 11V8h9v8h-3" /><rect x="7.500" y="12" width="10" height="8" /></svg>
);
function PanelHeader({ title }: { title?: string }) {
  return (
    <div className="flex h-11 shrink-0 items-center border-b-3 border-[#bdbdbd] bg-gradient-to-b from-[#ececec] to-[#d8d8d8] pl-1 text-[22px] text-black">
      <div className="flex gap-2">
        <button type="button" aria-label="Close panel"><CloseIcon /></button>
        <button type="button" aria-label="Float panel"><FloatIcon /></button>
      </div>
      <h2 className="flex-1 pt-1 pl-1 text-center">{title}</h2>
    </div>
  );
}
const SmallTool = ({ n, drop }: { n: string; drop?: boolean }) => (
  <button type="button" aria-label={n} className="relative flex w-15 pl-3">
    <Icon n={n} className="size-8" />
    {drop && <span className="absolute right-1.5 -bottom-2 text-black"><svg viewBox="0 0 18 12" className="h-3 w-[18px]" fill="none" stroke="currentColor" strokeWidth="2.600" aria-hidden="true"><path d="M2 2l7 8 7-8" /></svg></span>}
  </button>
);
const Triangle = ({ hidden }: { hidden?: boolean }) => (
  <svg viewBox="0 0 15 17" className={hidden ? "invisible h-[17px] w-[15px]" : "h-[17px] w-[15px]"} aria-hidden="true"><path d="M0 0l15 8.500L0 17z" fill="#8a8a8a" /></svg>
);
const panelBar = "flex shrink-0 items-center border-t-2 border-b-3 border-t-white border-b-[#adadad] bg-gradient-to-b from-[#eeeeee] to-[#c9c9c9]";

const BROWSER: [string, string, boolean][] = [
  ["star", "Favorites", false], ["projHome", "Project Home", true], ["home", "Home", true],
  ["folder", "/", true], ["folder", "/Volumes", true], ["geopkgPlain", "GeoPackage", false],
];
type LayerRow = { name: string; on?: boolean; sel?: boolean; sym: React.ReactNode };
const line = (c: string) => <path d="M0 16h32" stroke={c} strokeWidth="2" />;
const fill = (c: string, s: string) => <rect x="1" y="1" width="30" height="30" fill={c} stroke={s} strokeWidth="2" />;
const dot = (c: string) => <circle cx="16" cy="16" r="4.500" fill={c} stroke="#333" strokeWidth="2" />;
const LAYERS: LayerRow[] = [
  { name: "Grenz", sym: line("#8fb596") },
  { name: "Grenz", sym: line("#f2aebb") },
  { name: "de_ch_grenze", on: true, sel: true, sym: line("#a8a4d0") },
  { name: "Schweiz_Grenzen", sym: line("#fcb35a") },
  { name: "Schweiz_isoliert", sym: fill("#e77148", "#a05238") },
  { name: "ASTRA_Bruecken", sym: dot("#c83a3a") },
  { name: "DeutscheBrücken_Zust...", sym: dot("#b8aa8c") },
  { name: "ne_10m_admin_0_count...", on: true, sym: fill("#90512d", "#5e3a24") },
];
function Check({ on, id, label }: { on?: boolean; id?: string; label?: string }) {
  return (
    <span className="grid shrink-0">
      <input id={id} type="checkbox" defaultChecked={on} aria-label={label} className="col-start-1 row-start-1 size-7 appearance-none rounded-md border-2 border-[#c4c4c4] bg-white checked:border-[#3f97fb] checked:bg-[#3f97fb]" />
      {on && <svg viewBox="0 0 28 28" className="pointer-events-none col-start-1 row-start-1 size-7" fill="none" stroke="#fff" strokeWidth="3" aria-hidden="true"><path d="M7 15l5 6 9-14" /></svg>}
    </span>
  );
}

function LeftPanels() {
  return (
    <div className="flex w-[496px] shrink-0 flex-col bg-[#ececec]">
      <section aria-label="Browser" className="flex h-[338px] shrink-0 flex-col">
        <PanelHeader />
        <div className={`${panelBar} h-14`}>{["addLayer", "refresh", "filter", "collapse"].map((n) => <SmallTool key={n} n={n} />)}</div>
        <ul className="min-h-0 flex-1 overflow-hidden border-2 border-t-[#999] border-r-[#c0c0c0] border-b-[#999] border-l-[#c0c0c0] bg-white text-[26px] text-black">
          {BROWSER.map(([ic, t, tri]) => (
            <li key={t} className="flex h-10 items-center pl-[14px]">
              <Triangle hidden={!tri} /><Icon n={ic} className="mr-3 ml-5 size-8" />{t}
            </li>
          ))}
        </ul>
      </section>
      <section aria-label="Layers" className="flex min-h-0 flex-1 flex-col">
        <PanelHeader />
        <div className={`${panelBar} h-[58px]`}><SmallTool n="style" /><SmallTool n="addGroup" /><SmallTool n="eye" drop /><SmallTool n="filter" /></div>
        <ul className="min-h-0 flex-1 overflow-hidden border-2 border-t-[#999] border-r-[#c0c0c0] border-b-[#999] border-l-[#c0c0c0] bg-white text-[26px] font-bold">
          {LAYERS.map((l, i) => (
            <li key={i} className={l.sel ? "flex h-11 items-center bg-[#0069d9] pl-[54px] text-white underline decoration-2 underline-offset-4" : l.on ? "flex h-11 items-center pl-[54px] text-black" : "flex h-11 items-center pl-[54px] text-[#a0a0a4] italic"}>
              <Check on={l.on} label={l.name} />
              <svg viewBox="0 0 32 32" className="mr-3 ml-[26px] size-8 shrink-0" aria-hidden="true">{l.sym}</svg>
              <span className="whitespace-nowrap">{l.name}</span>
            </li>
          ))}
        </ul>
      </section>
      <section aria-label="Zoom to Lat Lon" className="flex h-[206px] shrink-0 flex-col border-r-2 border-[#a6a6a6]">
        <PanelHeader title="Zoom to Lat Lon" />
        <div className="flex flex-col gap-5 pt-6 pr-[22px] pl-6 text-[26px] text-black">
          <div className="flex items-center justify-between">
            <label htmlFor="latlon" className="whitespace-nowrap">Enter 'Latitude, Longitude'</label>
            <div className="flex gap-[10px]">
              <button type="button" aria-label="Zoom" className="flex size-[52px] items-center justify-center border-2 border-[#ababab] bg-[#eee]"><Icon n="target" className="size-8" /></button>
              <button type="button" aria-label="Clear" className="flex size-[52px] items-center justify-center border-2 border-[#ababab] bg-[#eee]">
                <svg viewBox="0 0 26 20" className="h-5 w-[26px]" aria-hidden="true"><path d="M6 0h20v20H6L0 10z" fill="#8a8a8a" /><path d="M10 5l10 10M20 5L10 15" stroke="#fff" strokeWidth="2" /></svg>
              </button>
            </div>
          </div>
          <input id="latlon" type="text" className="h-10 w-full border-2 border-[#b5b5b5] bg-white" />
        </div>
      </section>
    </div>
  );
}

const VTOOLS: [string, boolean][] = [["vPlus", false], ["raster", false], ["comma", false], ["featherPlus", false], ["mesh", false], ["elephant", true], ["wms", true], ["wcs", false], ["wfs", true], ["vStar", true]];
function LayerColumn() {
  return (
    <div role="toolbar" aria-orientation="vertical" className="flex w-[90px] shrink-0 flex-col border-r-3 border-[#b4b4b4] bg-gradient-to-r from-[#f0f0f0] to-[#c6c6c6]">
      <span className="flex h-5 shrink-0 items-center gap-2 pt-4 pl-[14px]">{[0, 1, 2, 3, 4].map((i) => <i key={i} className="size-1 shrink-0 rounded-full bg-[#999]" />)}</span>
      {VTOOLS.map(([n, d]) => (
        <button key={n} type="button" aria-label={n} className={d ? "flex h-19 shrink-0 items-center pl-5" : "flex h-19 shrink-0 items-center pl-3"}>
          <Icon n={n} />{d && <span className="mt-5 ml-0.5"><Chevron /></span>}
        </button>
      ))}
    </div>
  );
}

/* ---------- map ---------- */

const BORDERS = [
  "M323 13L316 28 310 50 309 72 315 92 316 112 309 125 292 136 288 155 285 185 278 198 247 243 244 265 235 285 231 300 229 342 250 384 251 408 247 420 234 434 231 446 232 465",
  "M0 788L15 793 35 794 27 815 29 828 38 836 54 841 62 849 78 843 97 837 132 838 147 831 157 815 157 806 150 797 151 790 160 791 175 798 183 790 185 780 180 773 186 769 194 766 195 757 185 750 205 732 230 719",
  "M1197 756L1230 766 1260 766 1274 758 1284 742 1290 729 1298 718 1308 714 1318 716 1326 728 1326 748 1334 755 1342 755 1349 751 1365 757 1386 758 1392 752 1394 764 1406 782 1410 798 1416 802 1430 794 1444 817 1458 839 1456 849 1446 858 1451 866 1453 888 1460 894 1474 888 1484 892 1492 883 1512 879 1521 884 1521 898 1513 930 1514 943 1502 948 1496 963 1536 958 1549 953 1562 944",
  "M1197 756L1202 775 1216 798 1234 808 1247 820 1247 854 1243 867 1224 894 1218 917 1199 944 1180 976 1170 1000 1167 1012 1167 1042 1171 1054 1180 1074 1180 1092 1174 1103 1163 1117 1163 1128 1175 1131 1203 1135 1213 1133 1222 1134 1252 1132 1348 1164 1349 1174 1356 1179 1352 1218 1358 1231 1370 1243 1422 1261 1444 1284 1460 1291 1474 1297 1484 1297 1500 1292 1517 1281 1523 1271 1527 1250 1534 1237 1542 1235 1549 1238 1562 1237",
  "M1185 969L1196 985 1194 997 1200 1010 1205 1023 1199 1045 1214 1055 1227 1074 1230 1092 1226 1115 1213 1132",
  "M1434 1556L1435 1541 1453 1518 1462 1485 1477 1480 1513 1468 1527 1468 1533 1475 1533 1507 1562 1520",
];
const FRONTIER = [
  "M247 732h15M247 732L262 741 273 747 283 748 323 739 334 732M393 730v6h66l22-6",
  "M780 629L814 629 811 625 816 608 828 608 845 619 857 632 848 634 849 643 862 655 873 662 884 664 903 661 920 655 929 645 937 642 960 645 992 648 1018 648 1025 659 1043 660 1061 664 1197 756",
];
function MapCanvas() {
  return (
    <main className="min-w-0 flex-1 border-x-4 border-t-2 border-b-2 border-[#b9b3b0] bg-[#90512d]">
      <svg viewBox="0 0 1308 1188" preserveAspectRatio="xMinYMin slice" className="size-full" fill="none" role="img" aria-label="Map">
        <g transform="translate(-4 -10) scale(.8418 .7717)">
          {BORDERS.map((d) => <path key={d} d={d} stroke="#232323" strokeWidth="1.800" vectorEffect="non-scaling-stroke" />)}
          {FRONTIER.map((d) => <path key={d} d={d} stroke="#e59cb8" strokeWidth="1.400" vectorEffect="non-scaling-stroke" />)}
        </g>
      </svg>
    </main>
  );
}

/* ---------- processing toolbox ---------- */

const TOOLBOX: [string, string][] = [
  ["clock", "Recently used"], ["q", "Cartography"], ["q", "Database"], ["q", "File tools"], ["q", "Graphics"], ["q", "Interpolation"], ["q", "Layer tools"],
  ["q", "Network analysis"], ["q", "Raster analysis"], ["q", "Raster terrain analysis"], ["q", "Raster tools"], ["q", "Vector analysis"], ["q", "Vector creation"],
  ["q", "Vector general"], ["q", "Vector geometry"], ["q", "Vector overlay"], ["q", "Vector selection"], ["q", "Vector table"],
  ["gdal", "GDAL"], ["grass", "GRASS"], ["copyDots", "Lat Lon tools"], ["saga", "SAGA"],
];
const Search = ({ className = "size-6" }: IconProps) => (
  <svg viewBox="0 0 24 24" className={`${className} shrink-0`} fill="none" stroke="#8a8a8a" strokeWidth="2" aria-hidden="true"><circle cx="9.500" cy="9.500" r="8" /><path d="M15 15l8 8" /></svg>
);
const Dotted = () => <span className="mx-2 h-11 w-0 border-l-2 border-dotted border-[#888]" />;

function Toolbox() {
  return (
    <aside className="flex w-[924px] shrink-0 flex-col bg-[#ececec]">
      <PanelHeader title="Processing Toolbox" />
      <div className={`${panelBar} h-14`}>
        <SmallTool n="gears" drop /><SmallTool n="snake" drop /><SmallTool n="clock" /><SmallTool n="doc" /><Dotted />
        <SmallTool n="note" /><Dotted /><SmallTool n="wrench" />
      </div>
      <div className="flex h-[42px] shrink-0 items-center gap-[14px] border-2 border-[#bdbdbd] bg-white pl-4">
        <Search />
        <input type="search" aria-label="Search" placeholder="Search..." className="min-w-0 flex-1 bg-transparent text-[26px] text-black outline-none placeholder:text-[#808080]" />
      </div>
      <ul className="min-h-0 flex-1 overflow-hidden border-2 border-t-[#999] border-r-[#c0c0c0] border-b-[#bbb] border-l-[#c0c0c0] bg-white text-[26px] text-black">
        {TOOLBOX.map(([ic, t]) => (
          <li key={t} className="flex h-10 items-center pl-[14px]"><Triangle /><Icon n={ic} className="mr-3 ml-[21px] size-8" />{t}</li>
        ))}
      </ul>
    </aside>
  );
}

/* ---------- status bar ---------- */

const flatBtn = "flex shrink-0 items-center justify-center border-2 border-[#a9a9a9] bg-[#e6e6e6]";
const field = "min-w-0 border-2 border-[#ababab] bg-[#fbfbfb] text-[22px] text-black";
const Stepper = ({ label }: { label: string }) => (
  <span className="ml-1.5 flex h-[42px] w-6 shrink-0 flex-col items-center justify-between rounded-xl border-2 border-[#b5b5b5] bg-white py-1.5">
    <button type="button" aria-label={`Increase ${label}`} className="flex h-3 items-center"><svg viewBox="0 0 12 8" className="h-2 w-3" fill="none" stroke="#444" strokeWidth="2.400" aria-hidden="true"><path d="M1 7l5-5 5 5" /></svg></button>
    <button type="button" aria-label={`Decrease ${label}`} className="flex h-3 items-center"><svg viewBox="0 0 12 8" className="h-2 w-3" fill="none" stroke="#444" strokeWidth="2.400" aria-hidden="true"><path d="M1 1l5 5 5-5" /></svg></button>
  </span>
);

function StatusBar() {
  return (
    <footer className="flex h-[88px] shrink-0 items-center rounded-b-lg border-t-2 border-[#7d7d7d] bg-gradient-to-b from-[#ebebeb] to-[#a8a8a8] pr-6 pb-0.5 pl-2 text-[22px] text-black">
      <div className="flex h-10 w-[437px] shrink-0 items-center gap-[14px] border-2 border-[#a9a9a9] bg-[#fdfdfd] pl-[14px]">
        <Search className="size-[26px]" />
        <input type="search" aria-label="Locator" placeholder="Type to locate (⌘K)" className="min-w-0 flex-1 bg-transparent text-[26px] outline-none placeholder:text-[#808080]" />
      </div>
      <div className="ml-auto flex items-center">
        <label htmlFor="coord" className="mr-1.5">Coordinate</label>
        <input id="coord" defaultValue="800014,6026695" className={`${field} h-10 w-[205px] px-2`} />
        <button type="button" aria-label="Toggle extents" className={`${flatBtn} ml-0.5 h-[52px] w-[50px]`}>
          <svg viewBox="0 0 32 34" className="h-[34px] w-8" fill="none" stroke="#111" strokeWidth="2.400" strokeLinecap="round" aria-hidden="true">
            <path d="M4 20c2-7 4-14 7-17 4-2 7 2 5 7-2 4-5 8-4 12" fill="#eee" />
            <path d="M13 4l-3 11M17 15L27 4M29 10l-5 4" />
            <ellipse cx="20" cy="24" rx="8" ry="7" fill="#e4e4e4" /><path d="M3 22l6 2-2 5M20 21c-3 0-4 3-2 5s6 0 5-3" />
          </svg>
        </button>
        <label htmlFor="scale" className="mr-2 ml-5">Scale</label>
        <div className="flex h-10 w-[208px]">
          <select id="scale" className={`${field} flex-1 appearance-none pl-1.5`}><option>1:3054684</option></select>
          <span className="flex w-[35px] items-center justify-center rounded-r-lg bg-gradient-to-b from-[#6cb0f8] to-[#0a72f6]"><Chevron className="text-white" /></span>
        </div>
        <button type="button" aria-label="Lock scale" className={`${flatBtn} ml-6 h-[52px] w-[50px]`}>
          <svg viewBox="0 0 24 30" className="h-[30px] w-6" aria-hidden="true"><path d="M5 15V8c0-8 14-8 14 0v7" fill="none" stroke="#999" strokeWidth="3" /><rect x="1" y="14" width="22" height="15" rx="2" fill="#555" /></svg>
        </button>
        <label htmlFor="magnifier" className="mx-2">Magnifier</label>
        <input id="magnifier" defaultValue="100%" className={`${field} h-[38px] w-[148px] px-0.5`} />
        <Stepper label="magnifier" />
        <label htmlFor="rotation" className="mr-[22px] ml-[19px]">Rotation</label>
        <input id="rotation" defaultValue="0.0 °" className={`${field} h-9 w-[143px] px-0.5`} />
        <Stepper label="rotation" />
        <span className="mr-2 ml-[14px] flex"><Check on id="render" /></span>
        <label htmlFor="render">Render</label>
        <button type="button" className={`${flatBtn} ml-1.5 h-[60px] w-[191px] gap-[10px] pr-3`}>
          <svg viewBox="0 0 28 28" className="size-7" fill="none" stroke="#777" strokeWidth="2.200" aria-hidden="true"><circle cx="14" cy="14" r="12.500" /><ellipse cx="14" cy="14" rx="6" ry="12.500" /><path d="M14 1v26M1 14h26M3 8h22M3 20h22" /></svg>
          EPSG:3395
        </button>
        <button type="button" aria-label="Messages" className={`${flatBtn} ml-3 h-[60px] w-[50px]`}>
          <svg viewBox="0 0 32 32" className="size-8" aria-hidden="true"><path d="M16 2c19 0 19 24 6 24 1 3 3 4 5 5-6 0-9-2-11-5C-2 26-3 2 16 2z" fill="#555" /><g fill="#fff"><circle cx="9" cy="14" r="2.200" /><circle cx="16" cy="14" r="2.200" /><circle cx="23" cy="14" r="2.200" /></g></svg>
        </button>
        <svg viewBox="0 0 42 44" className="ml-[22px] h-11 w-[42px]" aria-hidden="true">
          <path d="M2 18h8c-2-8 8-8 7 0h10v9c8-2 8 8 0 7v9H2v-8c6 1 6-8 0-7z" fill="#9c9c9c" stroke="#6f6f6f" strokeWidth="1.500" />
          <path d="M30 0l2 5 6-1-3 5 5 4-6 1-1 6-5-4-5 4 1-6-5-3 6-2 1-6 3 3z" fill="#e8e8e8" stroke="#777" strokeWidth="1.500" />
        </svg>
      </div>
    </footer>
  );
}

/* ---------- context menu ---------- */

type Item = { t: string; ic?: string; sub?: boolean; hot?: boolean; off?: boolean } | null;
const CONTEXT: Item[] = [
  { t: "Zoom to Layer", ic: "zoomLayer" }, { t: "Zoom to Selection", ic: "zoomSel", off: true }, { t: "Show in Overview", ic: "overview" },
  { t: "Show Feature Count" }, { t: "Copy Layer" }, { t: "Rename Layer" }, null,
  { t: "Duplicate Layer", ic: "dup" }, { t: "Remove Layer...", ic: "remove" }, null,
  { t: "Move to Top" }, null,
  { t: "Open Attribute Table", ic: "table" }, { t: "Toggle Editing", ic: "pencil" }, { t: "Filter..." }, null,
  { t: "Set Layer Scale Visibility..." }, { t: "Set CRS", sub: true }, null,
  { t: "Export", sub: true, hot: true }, null,
  { t: "Styles", sub: true }, { t: "Properties..." },
];
const EXPORT: Item[] = [{ t: "Save Features As...", hot: true }, { t: "Save Selected Features As...", off: true }, { t: "Save as Layer Definition File..." }, { t: "Save as QGIS Layer Style File..." }];

function Menu({ items, className }: { items: Item[]; className: string }) {
  return (
    <div role="menu" className={`absolute flex flex-col rounded-xl bg-[#ebebeb] py-2 text-[27px] leading-8 shadow-[0_10px_30px_rgba(0,0,0,0.45),0_0_2px_rgba(0,0,0,0.5)] ${className}`}>
      {items.map((it, i) =>
        it === null ? (
          <span key={i} role="separator" className="flex h-6 items-center"><i className="h-1 w-full bg-[#d6d6d6]" /></span>
        ) : (
          <button key={it.t} type="button" role="menuitem" disabled={it.off}
            className={`flex w-full items-center whitespace-nowrap pt-0.5 pr-6 text-left ${it.ic ? "h-10 pl-10" : "h-[38px] pl-9"} ${it.hot ? "bg-[#4277f5] text-white" : it.off ? "text-[#888]" : "text-[#222]"}`}>
            {it.ic && <Icon n={it.ic} className={it.off ? "mr-2 size-8 opacity-50" : "mr-2 size-8"} />}
            {it.t}
            {it.sub && <svg viewBox="0 0 16 16" className="ml-auto size-4" aria-hidden="true"><path d="M0 0l16 8-16 8z" fill="currentColor" /></svg>}
          </button>
        ),
      )}
    </div>
  );
}

/* ---------- dock ---------- */

const disc = (f: string, ring = "#e8eef6") => <circle cx="52" cy="52" r="47" fill={f} stroke={ring} strokeWidth="3" />;
const notches = Array.from({ length: 24 }, (_, i) => i * 15);

const APPS: { n: string; run?: boolean; badge?: string; art: React.ReactNode }[] = [
  { n: "Finder", run: true, art: (
    <g>
      <rect x="7" y="10" width="90" height="84" rx="3" fill="url(#finder)" />
      <path d="M53 10h41c2 0 3 1 3 3v78c0 2-1 3-3 3H60c-2-12-2-22-1-35H45c0-20 3-36 8-49z" fill="#f1f4f9" />
      <path d="M53 10c-5 13-8 29-8 49h14c-1 13-1 23 2 35" fill="none" stroke="#1c3f66" strokeWidth="1.500" />
      <path d="M32 32v8M72 32v8" stroke="#14202e" strokeWidth="4" strokeLinecap="round" />
      <path d="M25 64c13 15 41 15 54 0" fill="none" stroke="#14202e" strokeWidth="3.500" strokeLinecap="round" />
    </g>) },
  { n: "Visual Studio Code", run: true, art: (
    <g>
      <path d="M10 13L82 1l14 88-71 12z" fill="#2b2b2e" />
      <path d="M74 9l20 5 9 52-18 20z" fill="#4a9de2" />
      <path d="M74 9l11 77-58-10 56-3z" fill="#2f7fcc" />
      <path d="M66 26L28 61M24 39l40 28" stroke="#3389d8" strokeWidth="8" />
      <path d="M56 24l12 2v40l-8 1z" fill="#2670b8" />
    </g>) },
  { n: "Mail", run: true, badge: "3", art: (
    <g>
      <path d="M10 13L80 1l14 86-70 15z" fill="#fff" stroke="#fff" strokeWidth="3" strokeDasharray="3 2.500" />
      <path d="M16 18l59-11 13 76-59 12z" fill="#4e8fdc" />
      <path d="M24 76l50-20 12 24-57 14z" fill="#a9cbee" />
      <path d="M24 18c10 5 16 18 19 31 8 8 28 6 36 22-13 1-22-5-30-11-3 3-9 5-14 3 4-4 4-8 2-13-5-9-10-18-13-32z" fill="#5a4330" />
      <path d="M24 18c8 8 12 17 15 26M48 56c10 2 18 6 26 12" stroke="#e8dcc8" strokeWidth="2.500" fill="none" />
      <path d="M36 50c4-2 8 0 9 4l-4 14c-6 4-10 2-12-2z" fill="#a9763c" />
      <circle cx="80" cy="79" r="22" fill="none" stroke="#6c6f7a" strokeWidth="2" opacity="0.700" />
      <circle cx="80" cy="79" r="14" fill="none" stroke="#6c6f7a" strokeWidth="1.500" opacity="0.700" />
      <path d="M80 73c6-3 8 2 6 9-3 5-10 5-12 0-2-7 0-11 6-9z" fill="#565a66" opacity="0.800" />
    </g>) },
  { n: "Chrome", run: true, art: (
    <g>
      <circle cx="52" cy="52" r="50" fill="#f8cf5c" />
      <path d="M52 52L8.700 27A50 50 0 0 1 97 30z" fill="#d3544a" />
      <path d="M52 52L8.700 27A50 50 0 0 0 52 102l20-38z" fill="#51a46a" />
      <path d="M52 29.500h44A50 50 0 0 1 52 102l20-38z" fill="#f8cf5c" />
      <circle cx="52" cy="52" r="23" fill="#fff" /><circle cx="52" cy="52" r="18.500" fill="#5088ee" />
    </g>) },
  { n: "Terminal", run: true, art: (
    <g>
      <rect x="5" y="10" width="94" height="84" rx="4" fill="#c9ccce" /><rect x="7.500" y="12.500" width="89" height="79" rx="2" fill="#060606" /><rect x="12" y="17" width="80" height="70" fill="#303030" />
      <path d="M17 25l12 6-12 6" fill="none" stroke="#fff" strokeWidth="4" /><path d="M31 39h13" stroke="#fff" strokeWidth="4" />
    </g>) },
  { n: "Launchpad", art: (
    <g>
      {disc("url(#silver)", "#c9ccd0")}
      <path d="M80 23C66 24 48 34 41 50l-23 6 10 6 8 2 10 10 3 12 4 3c5-12 9-15 9-21 14-12 20-32 18-45z" fill="#3f4347" />
      <circle cx="62" cy="42" r="7" fill="#b8bfc4" /><path d="M30 68c-6 4-9 10-8 15 6-1 10-5 12-10z" fill="#3f4347" />
    </g>) },
  { n: "Contacts", art: (
    <g>
      <path d="M78 10l8 1 9 70-12 2z" fill="#f1f1f1" /><path d="M82 30h7l2 18-8 1z" fill="#5fc4ea" /><path d="M85 49h6l2 17-7 1z" fill="#67cf6c" /><path d="M87 67h7l1 14-7 2z" fill="#f2b53c" />
      <path d="M8 12L76 1l13 90-66 12z" fill="#c2a05c" stroke="#9a7b3d" strokeWidth="1.500" />
      <ellipse cx="52" cy="47" rx="24" ry="24" fill="#b8954f" stroke="#a08145" strokeWidth="2" />
      <path d="M32 60c4-5 8-5 8-9-5-8-5-22 4-24 5 0 8 4 7 10v20c0 5-2 10-3 13-8-1-13-5-16-10z" fill="#a08145" />
      <path d="M54 36c1-7 5-9 9-7 6 3 6 15 2 21 0 4 4 4 6 8-4 7-9 11-17 12-1-6 0-24 0-34z" fill="#a08145" />
    </g>) },
  { n: "App Store", badge: "2", art: (
    <g>{disc("url(#store)")}
      <path d="M57 20L30 75M46 20l29 55M18 56h42M68 56h14" stroke="#f4f8ff" strokeWidth="8" strokeLinecap="round" fill="none" transform="translate(2 0)" />
    </g>) },
  { n: "System Preferences", run: true, badge: "1", art: (
    <g>
      <rect x="5" y="8" width="94" height="88" rx="4" fill="url(#silver)" />
      <circle cx="52" cy="52" r="38" fill="#2f3133" />
      {notches.map((a) => <rect key={a} x="50" y="17" width="4" height="8" fill="#bdbdba" transform={`rotate(${a} 52 52)`} />)}
      <circle cx="52" cy="52" r="26" fill="none" stroke="#b8b8b5" strokeWidth="6" />
      <path d="M52 52L38 30M52 52h25M52 52L39 75" stroke="#b8b8b5" strokeWidth="6" /><circle cx="52" cy="52" r="5" fill="#8a9098" />
    </g>) },
  { n: "Skype", art: (
    <g>
      <path d="M30 1c9-1 14 4 18 3 30-3 50 22 46 48 3 6 8 13 8 23 0 16-12 27-26 27-7 0-11-3-15-4C30 104 4 82 8 48 4 42 2 36 2 29 2 13 13 2 30 1z" fill="#2b72a8" />
      <path d="M30 9c8 0 12 4 17 4 25-2 43 17 39 41 4 7 9 12 9 20 0 12-9 20-20 20-7 0-10-4-15-4C33 92 12 74 17 46c-3-5-7-10-7-17C10 17 19 9 30 9z" fill="#fff" />
      <path d="M71 36C68 24 34 20 34 37c0 16 37 10 37 28 0 17-34 17-38 3" fill="none" stroke="#2b72a8" strokeWidth="12" strokeLinecap="round" />
    </g>) },
  { n: "Sketch", art: (
    <g>
      <path d="M22 8l30-4 32 4 20 31-52 61L0 39z" fill="#f2932e" /><path d="M22 8l30-4 32 4-2 31H22z" fill="#fbc63c" /><path d="M52 4l30 35H22z" fill="#fde38c" /><path d="M22 39h60L52 100z" fill="#f9b92f" /><path d="M0 39h22l30 61z" fill="#ee6f2d" opacity="0.700" /><path d="M104 39H82l-30 61z" fill="#f07a2d" opacity="0.600" /><path d="M0 39h104" stroke="#ffe9a0" strokeWidth="1.500" />
    </g>) },
  { n: "GitHub Desktop", run: true, art: (
    <g>{disc("#eceef8", "#f6f6fb")}
      <path d="M26 22c5 0 10 3 14 6 8-2 16-2 24 0 4-3 9-6 14-6 2 6 2 11 1 16 5 7 5 16 3 22-3 9-10 14-18 15 2 3 2 6 2 10v14c-8 2-19 2-28 0V88c-9 2-15-2-17-8-2-3-4-6-4-9 6 2 7 11 14 11 3 0 5-1 7-3 0-2 1-3 2-4-9-1-15-6-18-15-2-7-2-15 3-22-1-5-1-10 1-16z" fill="#4f2a7c" />
    </g>) },
  { n: "Keychain Access", run: true, art: (
    <g>
      <g fill="#b9bfc0" stroke="#74797a" strokeWidth="1.500">
        <path d="M56 34l16-8 10 12-2 20 11 38-6 4-5-4-12-44z" /><path d="M48 48l16-4 4 14-10 44-8-6 1-34z" /><path d="M34 60l14 4-18 34-9-2 2-12z" />
      </g>
      <ellipse cx="54" cy="18" rx="17" ry="18" fill="none" stroke="#8b8178" strokeWidth="4" />
      <circle cx="28" cy="44" r="24" fill="#f08a2e" stroke="#dcd4cc" strokeWidth="3" /><circle cx="37" cy="28" r="6" fill="none" stroke="#dedede" strokeWidth="3" />
      <rect x="18" y="42" width="16" height="13" fill="#fff" transform="rotate(8 26 48)" /><path d="M31 43v-6c1-6 9-5 9 1v5" fill="none" stroke="#fff" strokeWidth="3" />
    </g>) },
  { n: "Word", run: true, art: (
    <g>
      <rect x="50" y="14" width="50" height="76" fill="#fff" /><path d="M58 26h34M58 46h34M58 67h34" stroke="#333" strokeWidth="4" /><path d="M58 36h34M58 56h34M58 77h34" stroke="#5d7ab5" strokeWidth="4" />
      <path d="M4 13L60 4v96L4 91z" fill="#3763ae" />
      <path d="M14 37l7 31 7-24 7 26 9-35" fill="none" stroke="#fff" strokeWidth="5.500" />
    </g>) },
  { n: "Grapher", art: (
    <g>
      <rect x="-3" y="-3" width="110" height="110" fill="#17191b" />
      <g fill="none" stroke="#fff" strokeWidth="2.400" strokeLinecap="round">
        <path d="M28 17C8 18 3 38 14 46 24 54 40 46 52 34" strokeWidth="3" />
        <path d="M72 16C66 2 44 16 37 38 30 60 40 66 50 58 60 50 66 40 69 30" strokeWidth="3.600" />
        <path d="M58 46C60 66 52 90 36 89 18 88 8 70 18 63 30 58 34 74 26 77" strokeWidth="3.200" />
        <path d="M64 54C52 76 60 90 76 85 96 76 102 46 90 45 80 46 80 70 73 96" strokeWidth="4.600" />
        <path d="M52 26C50 8 78-2 90 14 98 30 82 40 70 32 60 22 70 8 82 14" />
      </g>
    </g>) },
  { n: "TextEdit", run: true, art: (
    <g>
      <path d="M10 12L82 0l14 89-73 12z" fill="#fafafa" />
      <path d="M12 24l72-12M14 33l72-12M15 42l72-12M16 51l72-12M18 60l72-12M19 69l72-12M20 78l72-12M22 87l72-12" stroke="#b9bfc8" strokeWidth="1.200" /><path d="M19 11l11 88" stroke="#eab2b2" strokeWidth="1.200" />
      <path d="M84 2l9 2-20 74-8 22-3-1 3-22z" fill="#aebfce" stroke="#6f7f90" strokeWidth="1.500" />
    </g>) },
  { n: "Spotify", run: true, art: (
    <g><circle cx="52" cy="52" r="48" fill="#65d36e" />
      <g fill="none" stroke="#16180f" strokeLinecap="round"><path d="M24 34c20-6 42-4 59 7" strokeWidth="9.500" /><path d="M27 51c18-5 34-3 49 6" strokeWidth="8" /><path d="M28 67c15-4 29-2 42 5" strokeWidth="6.500" /></g>
    </g>) },
  { n: "Calendar", run: true, badge: "3", art: (
    <g>
      <path d="M5 20l6-2 12 70 70-10 3 6-78 14z" fill="#4b5560" /><path d="M8 18l74-12 12 74-72 11z" fill="#f6f6f4" /><path d="M8 18l74-12 3 20-73 11z" fill="#d9544e" />
      <text x="31" y="30" fontSize="16" fontFamily="Inter, sans-serif" fill="#fff" transform="rotate(-9 31 30)">FEB</text>
      <text x="29" y="79" fontSize="44" fontFamily="Inter, sans-serif" fill="#222" transform="rotate(-9 29 79)">21</text>
    </g>) },
  { n: "MacDown", run: true, art: (
    <g>{disc("url(#md)", "#f0f4f8")}
      <path d="M22 66V38h8l9 13 9-13h8v28h-8V51l-9 12-9-12v15z" fill="#fff" /><path d="M70 38h8v13h7L74 66 63 51h7z" fill="#fff" />
    </g>) },
  { n: "QGIS", run: true, art: (
    <g>
      <path d="M52 2a50 50 0 1 1-.1 0zM52 19a32.500 32.500 0 1 0 .1 0z" fill="url(#qg)" fillRule="evenodd" />
      <path d="M58 78l15 24h9L62 74zM86 56l14 18-3 10-24-28z" fill="#bd8d55" />
      <path d="M62 66l20 36h22L78 62z" fill="#6a9e3c" /><path d="M70 57l34 33v12L62 64z" fill="#84b062" /><path d="M62 62v14l20 26h22z" fill="#6a9e3c" />
      <path d="M43 44h18l12 14-14 2-2 14-14-16z" fill="#ec8a3e" /><path d="M56 57h14l7 7-15 1v13l-7-7z" fill="#f1e567" />
    </g>) },
];

function Dock() {
  return (
    <nav aria-label="Dock" className="absolute right-[166px] bottom-0 left-[167px] flex h-[142px] justify-between rounded-t-xl bg-[radial-gradient(ellipse_at_58%_110%,#f39a3c_0%,transparent_38%),radial-gradient(ellipse_at_30%_110%,#d48a70_0%,transparent_26%),linear-gradient(90deg,#97776a_0%,#b97a56_28%,#b98a5e_50%,#bd8d5a_70%,#ad8264_82%,#8a7a62_92%,#9a7b4c_100%)] px-[7px]">
      <div className="flex">
        {APPS.map((a) => (
          <button key={a.n} type="button" aria-label={a.n} className="relative flex w-[118px] justify-center pt-[15px]">
            <svg viewBox="0 0 104 104" className="size-26 overflow-visible drop-shadow-md" aria-hidden="true">{a.art}</svg>
            {a.badge && <span className="absolute top-3 right-1 flex size-10 items-center justify-center rounded-full bg-[#e84f40] text-[26px] text-white shadow">{a.badge}</span>}
            {a.run && <span className="absolute bottom-1 left-[55px] size-2 rounded-full bg-[#4a0f00]" />}
          </button>
        ))}
      </div>
      <div className="flex">
        <span className="mt-4 mr-6 h-[106px] w-0.5 bg-[#7d5c32]" />
        <button type="button" aria-label="Trash" className="flex w-[118px] justify-center pt-[15px]">
          <svg viewBox="0 0 104 104" className="size-26 overflow-visible" aria-hidden="true">
            <path d="M13 14l12 80c8 9 46 9 54 0l12-80z" fill="url(#bin)" />
            <ellipse cx="52" cy="13" rx="39" ry="11" fill="#a9aaac" stroke="#eef0f2" strokeWidth="2" />
            <path d="M20 12l12-12 10 8 8-10 8 14 8-12 10 10 8 4-8 10-20 4-26-2z" fill="#f2f2f2" stroke="#999" />
            <path d="M30 8l8 6M48 10l8 10M64 6l8 12" stroke="#444" strokeWidth="3" /><path d="M40 12l8 2" stroke="#2aa7d8" strokeWidth="4" /><path d="M60 16l6-8" stroke="#c0522a" strokeWidth="3" />
            <path d="M40 30c10 8 24 2 26-8" fill="none" stroke="#fff" strokeWidth="3" opacity="0.700" />
          </svg>
        </button>
      </div>
    </nav>
  );
}

function Gradients() {
  const g = (id: string, a: string, b: string) => (
    <linearGradient id={id} x1="0" y1="0" x2="0" y2="1"><stop offset="0" stopColor={a} /><stop offset="1" stopColor={b} /></linearGradient>
  );
  return (
    <svg className="absolute size-0" aria-hidden="true"><defs>
      {g("finder", "#5fd0fb", "#2b6bea")}{g("silver", "#d4e0e4", "#7f8282")}{g("store", "#54bdf8", "#2360e8")}{g("md", "#66cfd8", "#3f88cc")}{g("qg", "#96b43c", "#689a3c")}{g("bin", "#c8c8ca", "#eceef2")}
    </defs></svg>
  );
}

/* ---------- desktop ---------- */

function Backdrop() {
  return (
    <div aria-hidden="true" className="absolute inset-0 bg-[linear-gradient(90deg,#4b342d_0%,#3a2a22_50%,#8a5a1c_96%,#5c4216_100%)]">
      <div className="absolute bottom-0 left-0 h-[160px] w-[180px] bg-[repeating-linear-gradient(180deg,rgba(0,0,0,0.35)_0px,rgba(0,0,0,0)_5px,rgba(120,80,60,0.25)_9px,rgba(0,0,0,0.3)_13px),linear-gradient(180deg,#35361a_0%,#5a3c34_25%,#54403a_60%,#413c36_100%)]" />
      <div className="absolute right-0 bottom-0 h-[160px] w-[180px] bg-[repeating-linear-gradient(180deg,rgba(0,0,0,0.45)_0px,rgba(0,0,0,0)_5px,rgba(190,120,20,0.35)_9px,rgba(0,0,0,0.35)_14px),linear-gradient(90deg,#8a5c1c,#9a641e_50%,#4e3f16)]" />
      <div className="absolute right-0 bottom-[106px] h-[60px] w-[180px] bg-gradient-to-r from-[#5e5e5e] to-[#a5a5a5]">
        <svg viewBox="0 0 170 60" preserveAspectRatio="xMaxYMin meet" className="size-full" stroke="#333" strokeWidth="4"><path d="M6 29h28M6 41h22M6 53h26" /><rect x="72" y="34" width="16" height="6" fill="#222" stroke="none" /><rect x="104" y="30" width="80" height="16" rx="8" fill="#4c4c4c" stroke="none" /></svg>
      </div>
      <div className="absolute top-0 bottom-[160px] left-0 w-[400px] rounded-xl bg-gradient-to-b from-[#e6e6e6] to-[#d2d2d2]" />
      <div className="absolute top-[2px] bottom-[202px] left-0 w-[400px] overflow-hidden rounded-xl bg-[#111]">
        <svg viewBox="0 0 60 1550" preserveAspectRatio="xMinYMin slice" className="h-full w-[60px]" fill="none" stroke="#8c8c8c" strokeWidth="2">
          <circle cx="52" cy="46" r="13" fill="#cfcfcf" stroke="none" />
          <path d="M51 145v18M51 244v14M55 289c-8 2-5 9-1 10M49 353l6 18M48 417h8M48 480h8M48 544h8M49 608l6 12M51 673h6M51 673v20h6M48 736h8M48 801h8M48 864h8M48 928h8M51 1056v18M56 1122c-8 2-8 16 0 18M51 1184v20M58 1296c-12 6-12 26 0 32" />
          <path d="M56 992c-9 3-9 18 0 20" stroke="#fff" strokeWidth="3" />
          <rect x="0" y="984" width="8" height="37" fill="#57cf6c" stroke="none" />
          <path d="M0 1247h60" stroke="#2a2a2a" />
          <rect x="0" y="1376" width="60" height="180" fill="#262626" stroke="none" />
        </svg>
      </div>
    </div>
  );
}

export default function App() {
  return (
    <div className="relative flex h-screen w-full flex-col overflow-hidden bg-[#3a2a22] font-['Inter',sans-serif]">
      <Gradients />
      <MenuBar />
      <div className="relative min-h-0 flex-1">
        <Backdrop />
        <div className="absolute top-0 right-0 bottom-[142px] left-[54px] flex flex-col overflow-hidden rounded-xl shadow-[0_0_40px_rgba(0,0,0,0.6)]">
          <div className="grid h-11 shrink-0 grid-cols-3 items-center border-b-2 border-[#b5b0b5] bg-gradient-to-b from-[#ebe9eb] to-[#d3d0d3] px-4 pt-0.5 text-[26px] text-[#2e2e2e]">
            <div className="flex gap-4">
              <button type="button" aria-label="Close" className="size-6 rounded-full border-2 border-[#dd5145] bg-[#ee6a5f]" />
              <button type="button" aria-label="Minimize" className="size-6 rounded-full border-2 border-[#dea236] bg-[#f6be50]" />
              <button type="button" aria-label="Zoom window" className="size-6 rounded-full border-2 border-[#4bab3b] bg-[#62c655]" />
            </div>
            <h1 className="text-center">*project2 - QGIS</h1>
          </div>
          <Toolbars />
          <div className="flex min-h-0 flex-1">
            <LayerColumn />
            <LeftPanels />
            <MapCanvas />
            <Toolbox />
          </div>
          <StatusBar />
        </div>
        <Dock />
      </div>
      <Menu items={CONTEXT} className="top-[100px] left-[374px] w-[460px]" />
      <Menu items={EXPORT} className="top-[766px] left-[834px] w-[472px]" />
    </div>
  );
}
